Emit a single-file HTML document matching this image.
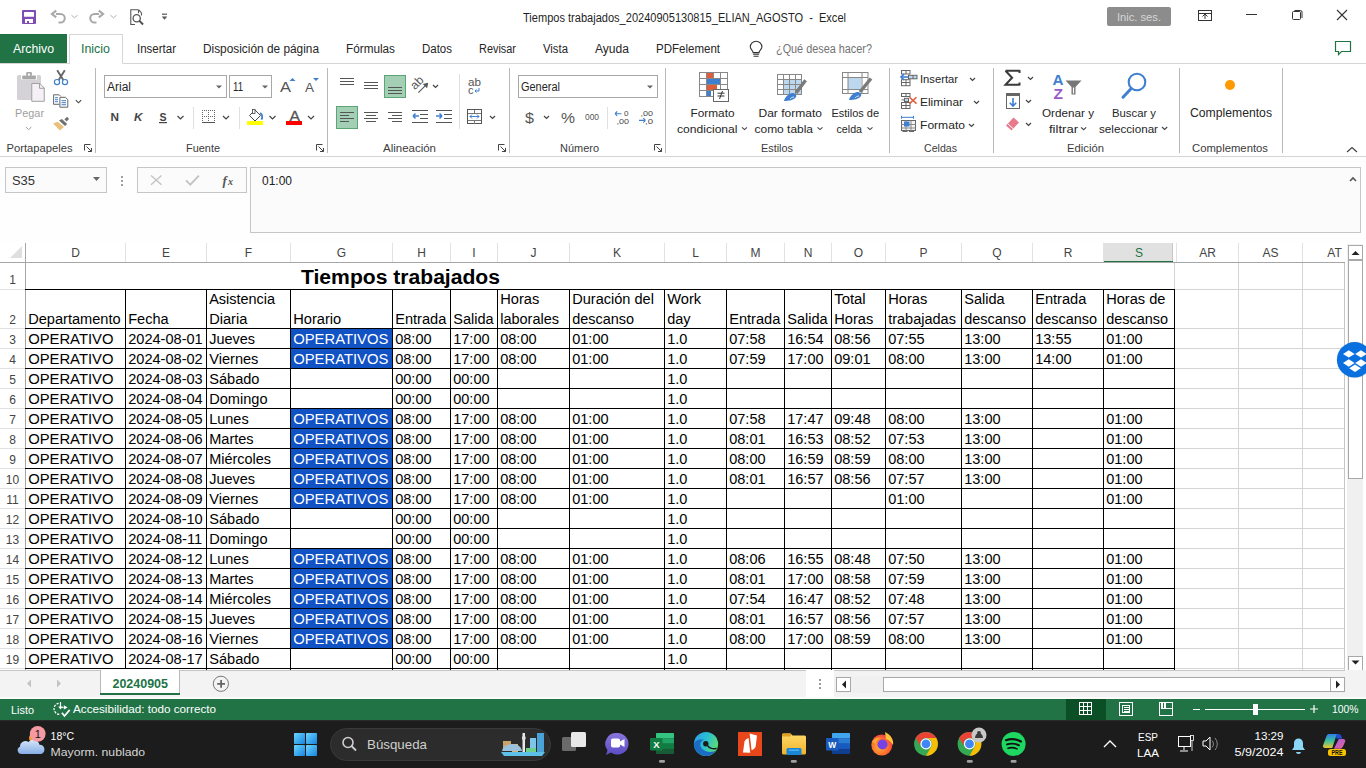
<!DOCTYPE html>
<html><head><meta charset="utf-8"><title>Excel</title>
<style>
html,body{margin:0;padding:0;width:1366px;height:768px;overflow:hidden;background:#fff;}
svg{display:block;font-family:"Liberation Sans",sans-serif;}
</style></head>
<body>
<svg width="1366" height="768" viewBox="0 0 1366 768" shape-rendering="auto">
<rect x="0" y="0" width="1366" height="720" fill="#ffffff"/>
<rect x="22" y="10" width="14" height="14" fill="#7f4bb5" rx="1"/>
<rect x="24" y="12" width="10" height="4.8" fill="#fff" rx="0.6"/>
<rect x="25" y="19" width="8" height="4" fill="#fff"/>
<rect x="27" y="21" width="2" height="2" fill="#7f4bb5"/>
<path d="M56.2 10.6L52 14L56.2 17.4" fill="none" stroke="#a9a9a9" stroke-width="2.2"/>
<path d="M56 14H60.5A4.3 4.3 0 0 1 60.5 22.6H58.5" fill="none" stroke="#a9a9a9" stroke-width="2"/>
<path d="M71.5 15.2l3 2.6 3-2.6" fill="none" stroke="#b0b0b0" stroke-width="1"/>
<path d="M98.8 10.6L103 14L98.8 17.4" fill="none" stroke="#a9a9a9" stroke-width="2.2"/>
<path d="M99 14H94.5A4.3 4.3 0 0 0 94.5 22.6H96.5" fill="none" stroke="#a9a9a9" stroke-width="2"/>
<path d="M110.5 15.2l3 2.6 3-2.6" fill="none" stroke="#b0b0b0" stroke-width="1"/>
<path d="M138.5 9.8H130.8V24.5H135 M141.5 13V15.5 M138.5 9.8v3.5 M138.8 9.8l2.7 3" fill="none" stroke="#555" stroke-width="1.1"/>
<circle cx="136.7" cy="18.2" r="3.6" fill="none" stroke="#555" stroke-width="1.3"/>
<path d="M139.3 20.8l3.8 3.6" fill="none" stroke="#555" stroke-width="2"/>
<rect x="162" y="13.6" width="5" height="1.2" fill="#555"/>
<path d="M161.8 16.6h5.4l-2.7 3.2z" fill="#555"/>
<text x="523" y="22" font-size="12" fill="#1f1f1f" textLength="323" lengthAdjust="spacingAndGlyphs" xml:space="preserve">Tiempos trabajados_20240905130815_ELIAN_AGOSTO  -  Excel</text>
<rect x="1107" y="7" width="64" height="19" fill="#8c8c8c" rx="2"/>
<text x="1117" y="21" font-size="11.5" fill="#d6d6d6" textLength="44" lengthAdjust="spacingAndGlyphs">Inic. ses.</text>
<rect x="1198.5" y="10.5" width="13" height="10" fill="none" stroke="#333" stroke-width="1"/>
<rect x="1199" y="13" width="12" height="1" fill="#333"/>
<path d="M1205 19v-5 M1202.5 16.5l2.5-2.5 2.5 2.5" fill="none" stroke="#333" stroke-width="1"/>
<rect x="1246" y="14" width="11" height="1" fill="#333"/>
<rect x="1292.5" y="11.5" width="8" height="8" fill="none" stroke="#333" stroke-width="1" rx="1"/>
<path d="M1294.5 10.5h6a1.5 1.5 0 0 1 1.5 1.5v6" fill="none" stroke="#333" stroke-width="1"/>
<path d="M1337 10l10 10M1347 10l-10 10" fill="none" stroke="#333" stroke-width="1.1"/>
<rect x="0" y="34" width="67" height="29" fill="#217346"/>
<text x="13" y="52.5" font-size="12" fill="#ffffff" textLength="41" lengthAdjust="spacingAndGlyphs">Archivo</text>
<rect x="0" y="63" width="1366" height="1" fill="#d5d5d5"/>
<rect x="70" y="34" width="53" height="30" fill="#ffffff"/>
<path d="M69.5 63.5V34.5H122.5V63.5" fill="none" stroke="#d5d5d5" stroke-width="1"/>
<rect x="70" y="63" width="52" height="1" fill="#ffffff"/>
<text x="81" y="52.5" font-size="12" fill="#217346" textLength="29" lengthAdjust="spacingAndGlyphs">Inicio</text>
<text x="137" y="52.5" font-size="12" fill="#262626" textLength="39" lengthAdjust="spacingAndGlyphs">Insertar</text>
<text x="203" y="52.5" font-size="12" fill="#262626" textLength="116" lengthAdjust="spacingAndGlyphs">Disposición de página</text>
<text x="346" y="52.5" font-size="12" fill="#262626" textLength="49" lengthAdjust="spacingAndGlyphs">Fórmulas</text>
<text x="422" y="52.5" font-size="12" fill="#262626" textLength="30" lengthAdjust="spacingAndGlyphs">Datos</text>
<text x="479" y="52.5" font-size="12" fill="#262626" textLength="37" lengthAdjust="spacingAndGlyphs">Revisar</text>
<text x="543" y="52.5" font-size="12" fill="#262626" textLength="25" lengthAdjust="spacingAndGlyphs">Vista</text>
<text x="595" y="52.5" font-size="12" fill="#262626" textLength="34" lengthAdjust="spacingAndGlyphs">Ayuda</text>
<text x="656" y="52.5" font-size="12" fill="#262626" textLength="64" lengthAdjust="spacingAndGlyphs">PDFelement</text>
<path d="M753.6 56.3h5 M753.1 54.3h6 M753.1 52.6c0-2.3-2.8-3.3-2.8-5.6a5.8 5.8 0 0 1 11.6 0c0 2.3-2.8 3.3-2.8 5.6z" fill="none" stroke="#333" stroke-width="1.1"/>
<text x="776" y="53" font-size="12" fill="#737373" textLength="96" lengthAdjust="spacingAndGlyphs">¿Qué desea hacer?</text>
<path d="M1335.5 41.5h15v10h-9l-3 3v-3h-3z" fill="none" stroke="#217346" stroke-width="1.2"/>
<rect x="0" y="156" width="1366" height="1" fill="#d5d5d5"/>
<rect x="95" y="68" width="1" height="85" fill="#b8b8b8"/>
<rect x="327" y="68" width="1" height="85" fill="#b8b8b8"/>
<rect x="509" y="68" width="1" height="85" fill="#b8b8b8"/>
<rect x="665" y="68" width="1" height="85" fill="#b8b8b8"/>
<rect x="889" y="68" width="1" height="85" fill="#b8b8b8"/>
<rect x="993" y="68" width="1" height="85" fill="#b8b8b8"/>
<rect x="1179" y="68" width="1" height="85" fill="#b8b8b8"/>
<rect x="1282" y="68" width="1" height="85" fill="#b8b8b8"/>
<text x="6.5" y="151.7" font-size="10.6" fill="#3c3c3c" textLength="66" lengthAdjust="spacingAndGlyphs">Portapapeles</text>
<text x="186" y="151.7" font-size="10.6" fill="#3c3c3c" textLength="34" lengthAdjust="spacingAndGlyphs">Fuente</text>
<text x="383" y="151.7" font-size="10.6" fill="#3c3c3c" textLength="53" lengthAdjust="spacingAndGlyphs">Alineación</text>
<text x="560" y="151.7" font-size="10.6" fill="#3c3c3c" textLength="39" lengthAdjust="spacingAndGlyphs">Número</text>
<text x="761" y="151.7" font-size="10.6" fill="#3c3c3c" textLength="32" lengthAdjust="spacingAndGlyphs">Estilos</text>
<text x="924" y="151.7" font-size="10.6" fill="#3c3c3c" textLength="33" lengthAdjust="spacingAndGlyphs">Celdas</text>
<text x="1067" y="151.7" font-size="10.6" fill="#3c3c3c" textLength="37" lengthAdjust="spacingAndGlyphs">Edición</text>
<text x="1192" y="151.7" font-size="10.6" fill="#3c3c3c" textLength="76" lengthAdjust="spacingAndGlyphs">Complementos</text>
<path d="M84.5 150.5v-6h6 M86.5 146.5l5 5 M91.5 148v3.5h-3.5" fill="none" stroke="#444" stroke-width="1"/>
<path d="M316.5 150.5v-6h6 M318.5 146.5l5 5 M323.5 148v3.5h-3.5" fill="none" stroke="#444" stroke-width="1"/>
<path d="M498.5 150.5v-6h6 M500.5 146.5l5 5 M505.5 148v3.5h-3.5" fill="none" stroke="#444" stroke-width="1"/>
<path d="M654.5 150.5v-6h6 M656.5 146.5l5 5 M661.5 148v3.5h-3.5" fill="none" stroke="#444" stroke-width="1"/>
<path d="M1347 152l5-4.5 5 4.5" fill="none" stroke="#444" stroke-width="1.2"/>
<rect x="17" y="75" width="24" height="25" fill="#d4d2d6" rx="1.5"/>
<rect x="21" y="75" width="16" height="4.5" fill="#ffffff"/>
<rect x="22.2" y="75.6" width="13.7" height="3.6" fill="#a8a8a8" rx="0.8"/>
<rect x="26.2" y="72.1" width="5.7" height="4" fill="#a8a8a8" rx="1"/>
<rect x="28" y="73.6" width="2" height="2" fill="#ffffff"/>
<path d="M31.75 83.5h8l4.5 4.5v13.3h-12.5z" fill="#f4f0f6" stroke="#a0a0a0" stroke-width="1"/>
<path d="M39.5 83.5v4.8h4.8" fill="none" stroke="#a0a0a0" stroke-width="1"/>
<text x="15" y="116.8" font-size="11.5" fill="#a0a0a0" textLength="29" lengthAdjust="spacingAndGlyphs">Pegar</text>
<path d="M25.8 127l2.8 2.6 2.8-2.6" fill="none" stroke="#a0a0a0" stroke-width="1"/>
<path d="M57.2 70.3l6.6 10.5 M64.8 70.3l-6.6 10.5" fill="none" stroke="#666" stroke-width="1.9"/>
<circle cx="57" cy="82.1" r="2.6" fill="#fff" stroke="#3f7fcf" stroke-width="1.2"/>
<circle cx="65" cy="82.1" r="2.6" fill="#fff" stroke="#3f7fcf" stroke-width="1.2"/>
<path d="M53.6 94.8h5.6l1.5 1.5 M53.6 94.8v9.5h6" fill="none" stroke="#666" stroke-width="1"/>
<path d="M59.9 97.3h5.5l2.4 2.4v7.5h-7.9z" fill="#fff" stroke="#666" stroke-width="1"/>
<rect x="55" y="97.2" width="3" height="1" fill="#3f7fcf"/>
<rect x="55" y="99.2" width="3" height="1" fill="#3f7fcf"/>
<rect x="55" y="101.2" width="3" height="1" fill="#3f7fcf"/>
<rect x="61.5" y="100.2" width="4.5" height="1" fill="#3f7fcf"/>
<rect x="61.5" y="102.2" width="4.5" height="1" fill="#3f7fcf"/>
<rect x="61.5" y="104.2" width="4.5" height="1" fill="#3f7fcf"/>
<path d="M75.8 100.2l2.7 2.6 2.7-2.6" fill="none" stroke="#444" stroke-width="1.1"/>
<path d="M53.1 123.4L57.5 121.8L64 126.8L60 130.6z" fill="#e8c07a"/>
<path d="M59 120.6L61.9 119L67.2 124L65 125.9z" fill="#707070"/>
<path d="M64.4 119.3L67.2 116.8L69 119L66.6 121.5z" fill="#707070"/>
<rect x="104.5" y="75.5" width="122" height="22" fill="#fff" stroke="#a8a8a8" stroke-width="1"/>
<text x="107" y="91" font-size="12" fill="#262626" textLength="24" lengthAdjust="spacingAndGlyphs">Arial</text>
<path d="M216 85.5h6l-3 3z" fill="#666"/>
<rect x="229.5" y="75.5" width="42" height="22" fill="#fff" stroke="#a8a8a8" stroke-width="1"/>
<text x="233" y="91" font-size="12" fill="#262626" textLength="10" lengthAdjust="spacingAndGlyphs">11</text>
<path d="M262 85.5h6l-3 3z" fill="#666"/>
<text x="280" y="92" font-size="15" fill="#555" textLength="11" lengthAdjust="spacingAndGlyphs">A</text>
<path d="M289.5 81l3-3 3 3z" fill="#3f7fcf"/>
<text x="305" y="92" font-size="12" fill="#555" textLength="9" lengthAdjust="spacingAndGlyphs">A</text>
<path d="M313 78h6l-3 3z" fill="#3f7fcf"/>
<text x="110.5" y="120.7" font-size="11.5" fill="#444" font-weight="bold" textLength="8.5" lengthAdjust="spacingAndGlyphs">N</text>
<text x="134" y="120.7" font-size="11.5" fill="#444" font-weight="bold" textLength="8.5" lengthAdjust="spacingAndGlyphs" font-style="italic">K</text>
<text x="159.5" y="120.7" font-size="11.5" fill="#444" font-weight="bold" textLength="7" lengthAdjust="spacingAndGlyphs">S</text>
<rect x="159" y="122" width="8" height="1.2" fill="#444"/>
<path d="M177.5 116l3 3 3-3" fill="none" stroke="#444" stroke-width="1.2"/>
<rect x="193" y="107" width="1" height="22" fill="#e0e0e0"/>
<rect x="202" y="110" width="1" height="1" fill="#666"/>
<rect x="204" y="110" width="1" height="1" fill="#666"/>
<rect x="206" y="110" width="1" height="1" fill="#666"/>
<rect x="208" y="110" width="1" height="1" fill="#666"/>
<rect x="210" y="110" width="1" height="1" fill="#666"/>
<rect x="212" y="110" width="1" height="1" fill="#666"/>
<rect x="214" y="110" width="1" height="1" fill="#666"/>
<rect x="202" y="116" width="1" height="1" fill="#666"/>
<rect x="204" y="116" width="1" height="1" fill="#666"/>
<rect x="206" y="116" width="1" height="1" fill="#666"/>
<rect x="208" y="116" width="1" height="1" fill="#666"/>
<rect x="210" y="116" width="1" height="1" fill="#666"/>
<rect x="212" y="116" width="1" height="1" fill="#666"/>
<rect x="214" y="116" width="1" height="1" fill="#666"/>
<rect x="202" y="112" width="1" height="1" fill="#666"/>
<rect x="202" y="114" width="1" height="1" fill="#666"/>
<rect x="202" y="116" width="1" height="1" fill="#666"/>
<rect x="202" y="118" width="1" height="1" fill="#666"/>
<rect x="202" y="120" width="1" height="1" fill="#666"/>
<rect x="208" y="112" width="1" height="1" fill="#666"/>
<rect x="208" y="114" width="1" height="1" fill="#666"/>
<rect x="208" y="116" width="1" height="1" fill="#666"/>
<rect x="208" y="118" width="1" height="1" fill="#666"/>
<rect x="208" y="120" width="1" height="1" fill="#666"/>
<rect x="214" y="112" width="1" height="1" fill="#666"/>
<rect x="214" y="114" width="1" height="1" fill="#666"/>
<rect x="214" y="116" width="1" height="1" fill="#666"/>
<rect x="214" y="118" width="1" height="1" fill="#666"/>
<rect x="214" y="120" width="1" height="1" fill="#666"/>
<rect x="202" y="122" width="13" height="1" fill="#555"/>
<path d="M223 116l3 3 3-3" fill="none" stroke="#444" stroke-width="1.2"/>
<rect x="239" y="107" width="1" height="22" fill="#e0e0e0"/>
<path d="M249.5 115.5L255 110L260.5 115.5L255 121z" fill="#fff" stroke="#444" stroke-width="1"/>
<rect x="252.5" y="109.5" width="2.5" height="4" fill="#fff" stroke="#444" stroke-width="0.8"/>
<path d="M260 113.2c2 0.8 3 3 1.5 6.5" fill="none" stroke="#3f7fcf" stroke-width="1.8"/>
<rect x="247" y="121" width="16" height="4" fill="#ffff00"/>
<path d="M269.5 116l3 3 3-3" fill="none" stroke="#444" stroke-width="1.2"/>
<text x="289.5" y="120.6" font-size="14" fill="#555" textLength="10.5" lengthAdjust="spacingAndGlyphs" stroke="#555" stroke-width="0.3">A</text>
<rect x="286" y="121" width="16" height="4" fill="#ff0000"/>
<path d="M308 116l3 3 3-3" fill="none" stroke="#444" stroke-width="1.2"/>
<rect x="340" y="78" width="14" height="1" fill="#555"/>
<rect x="340" y="81" width="14" height="1" fill="#555"/>
<rect x="340" y="84" width="14" height="1" fill="#555"/>
<rect x="364" y="82" width="14" height="1" fill="#555"/>
<rect x="364" y="85" width="14" height="1" fill="#555"/>
<rect x="364" y="88" width="14" height="1" fill="#555"/>
<rect x="384.5" y="75.5" width="21" height="22" fill="#a3d0b5" stroke="#5ba577" stroke-width="1"/>
<rect x="388" y="87" width="14" height="1" fill="#555"/>
<rect x="388" y="90" width="14" height="1" fill="#555"/>
<rect x="388" y="93" width="14" height="1" fill="#555"/>
<text x="415" y="90.2" font-size="12" fill="#555" transform="rotate(-45 415 90.2)">ab</text>
<path d="M418.4 92.6L427.6 83.4" fill="none" stroke="#555" stroke-width="1.1"/>
<path d="M428.2 82.8L422.8 83.9L427.1 88.2z" fill="#555"/>
<path d="M433 85l2.5 2.5 2.5-2.5" fill="none" stroke="#444" stroke-width="1.2"/>
<rect x="459" y="74" width="1" height="55" fill="#e0e0e0"/>
<text x="468" y="86" font-size="11" fill="#555" textLength="13" lengthAdjust="spacingAndGlyphs">ab</text>
<text x="468" y="94" font-size="11" fill="#555">c</text>
<path d="M479 88v3h-4 M476.5 89.5l-1.5 1.5 1.5 1.5" fill="none" stroke="#3f7fcf" stroke-width="1"/>
<rect x="336.5" y="106.5" width="21" height="22" fill="#a3d0b5" stroke="#5ba577" stroke-width="1"/>
<rect x="340" y="112" width="14" height="1" fill="#555"/>
<rect x="340" y="115" width="9" height="1" fill="#555"/>
<rect x="340" y="118" width="14" height="1" fill="#555"/>
<rect x="340" y="121" width="9" height="1" fill="#555"/>
<rect x="364" y="112" width="14" height="1" fill="#555"/>
<rect x="366" y="115" width="10" height="1" fill="#555"/>
<rect x="364" y="118" width="14" height="1" fill="#555"/>
<rect x="366" y="121" width="10" height="1" fill="#555"/>
<rect x="388" y="112" width="14" height="1" fill="#555"/>
<rect x="392" y="115" width="10" height="1" fill="#555"/>
<rect x="388" y="118" width="14" height="1" fill="#555"/>
<rect x="392" y="121" width="10" height="1" fill="#555"/>
<rect x="412" y="110" width="16" height="1" fill="#555"/>
<rect x="420" y="114" width="8" height="1" fill="#555"/>
<rect x="420" y="118" width="8" height="1" fill="#555"/>
<rect x="412" y="122" width="16" height="1" fill="#555"/>
<path d="M413 116h6 M413 116l2.5-2.5 M413 116l2.5 2.5" fill="none" stroke="#3f7fcf" stroke-width="1.5"/>
<rect x="436" y="110" width="16" height="1" fill="#555"/>
<rect x="444" y="114" width="8" height="1" fill="#555"/>
<rect x="444" y="118" width="8" height="1" fill="#555"/>
<rect x="436" y="122" width="16" height="1" fill="#555"/>
<path d="M436 116h6 M442 116l-2.5-2.5 M442 116l-2.5 2.5" fill="none" stroke="#3f7fcf" stroke-width="1.5"/>
<rect x="467.5" y="109.5" width="14" height="14" fill="none" stroke="#555" stroke-width="1"/>
<rect x="468" y="113" width="13" height="1" fill="#777"/>
<rect x="468" y="120" width="13" height="1" fill="#777"/>
<rect x="474" y="110" width="1" height="3" fill="#777"/>
<rect x="474" y="120" width="1" height="4" fill="#777"/>
<path d="M470 116.5h9 M470 116.5l2-2 M470 116.5l2 2 M479 116.5l-2-2 M479 116.5l-2 2" fill="none" stroke="#3f7fcf" stroke-width="1"/>
<path d="M490 116l2.5 2.5 2.5-2.5" fill="none" stroke="#444" stroke-width="1.2"/>
<rect x="518.5" y="75.5" width="139" height="22" fill="#fff" stroke="#a8a8a8" stroke-width="1"/>
<text x="521" y="91" font-size="12" fill="#262626" textLength="39" lengthAdjust="spacingAndGlyphs">General</text>
<path d="M647 85.5h6l-3 3z" fill="#666"/>
<text x="525" y="123" font-size="15" fill="#555" textLength="9" lengthAdjust="spacingAndGlyphs">$</text>
<path d="M544 116l2.5 2.5 2.5-2.5" fill="none" stroke="#444" stroke-width="1.2"/>
<text x="561" y="123" font-size="14" fill="#555" textLength="14" lengthAdjust="spacingAndGlyphs">%</text>
<text x="585" y="120" font-size="9" fill="#555" textLength="14" lengthAdjust="spacingAndGlyphs">000</text>
<rect x="607" y="107" width="1" height="22" fill="#e0e0e0"/>
<text x="624" y="115.5" font-size="7.5" fill="#444" textLength="4.5" lengthAdjust="spacingAndGlyphs">0</text>
<text x="616.5" y="123.8" font-size="7.5" fill="#444" textLength="12.5" lengthAdjust="spacingAndGlyphs">,00</text>
<path d="M615 113.7h6.5 M615 113.7l2.2-2.2 M615 113.7l2.2 2.2" fill="none" stroke="#3f7fcf" stroke-width="1.1"/>
<text x="640.5" y="115.5" font-size="7.5" fill="#444" textLength="12.5" lengthAdjust="spacingAndGlyphs">,00</text>
<text x="645" y="123.8" font-size="7.5" fill="#444" textLength="8" lengthAdjust="spacingAndGlyphs">,0</text>
<path d="M639 120.4h6.5 M645.5 120.4l-2.2-2.2 M645.5 120.4l-2.2 2.2" fill="none" stroke="#3f7fcf" stroke-width="1.1"/>
<rect x="699" y="72" width="1" height="25" fill="#888"/>
<rect x="706" y="72" width="1" height="25" fill="#888"/>
<rect x="713" y="72" width="1" height="25" fill="#888"/>
<rect x="720" y="72" width="1" height="25" fill="#888"/>
<rect x="727" y="72" width="1" height="25" fill="#888"/>
<rect x="699" y="72" width="29" height="1" fill="#888"/>
<rect x="699" y="78" width="29" height="1" fill="#888"/>
<rect x="699" y="84" width="29" height="1" fill="#888"/>
<rect x="699" y="90" width="29" height="1" fill="#888"/>
<rect x="699" y="96" width="29" height="1" fill="#888"/>
<rect x="707" y="73" width="6" height="5" fill="#e05c3a"/>
<rect x="707" y="79" width="13" height="5" fill="#3f7fcf"/>
<rect x="707" y="85" width="10" height="5" fill="#e05c3a"/>
<rect x="707" y="91" width="4" height="5" fill="#3f7fcf"/>
<rect x="713.5" y="89.5" width="15" height="12" fill="#fff" stroke="#666" stroke-width="1"/>
<path d="M717.5 96h7 M717.5 93.2h7 M719.5 99l3-8" fill="none" stroke="#333" stroke-width="1"/>
<text x="690.5" y="117" font-size="11.5" fill="#262626" textLength="44" lengthAdjust="spacingAndGlyphs">Formato</text>
<text x="677" y="133" font-size="11.5" fill="#262626" textLength="60.5" lengthAdjust="spacingAndGlyphs">condicional</text>
<path d="M742 127.3l2.5 2.3 2.5-2.3" fill="none" stroke="#444" stroke-width="1.1"/>
<rect x="783" y="80" width="19" height="15" fill="#bdd7ee"/>
<rect x="777" y="74" width="1" height="21" fill="#888"/>
<rect x="783" y="74" width="1" height="21" fill="#888"/>
<rect x="789" y="74" width="1" height="21" fill="#888"/>
<rect x="795" y="74" width="1" height="21" fill="#888"/>
<rect x="801" y="74" width="1" height="21" fill="#888"/>
<rect x="777" y="74" width="25" height="1" fill="#888"/>
<rect x="777" y="79" width="25" height="1" fill="#888"/>
<rect x="777" y="84" width="25" height="1" fill="#888"/>
<rect x="777" y="89" width="25" height="1" fill="#888"/>
<rect x="777" y="94" width="25" height="1" fill="#888"/>
<path d="M805.6 80.3L796 93" fill="none" stroke="#7a7a7a" stroke-width="3.4"/>
<path d="M784 101c1-4 4-7 8-8 3 0 5 2 4 4-2 3-7 4-12 4z" fill="#3f7fcf"/>
<path d="M790 99c1-1 2-2 4-2" fill="none" stroke="#fff" stroke-width="0.8"/>
<text x="758.5" y="117" font-size="11.5" fill="#262626" textLength="63.5" lengthAdjust="spacingAndGlyphs">Dar formato</text>
<text x="754.5" y="133" font-size="11.5" fill="#262626" textLength="58.5" lengthAdjust="spacingAndGlyphs">como tabla</text>
<path d="M817.5 127.3l2.5 2.3 2.5-2.3" fill="none" stroke="#444" stroke-width="1.1"/>
<rect x="848" y="78" width="13" height="11" fill="#bdd7ee"/>
<rect x="842.5" y="72.5" width="25.5" height="21" fill="none" stroke="#888" stroke-width="1"/>
<rect x="847.5" y="72.5" width="1" height="21.5" fill="#888"/>
<rect x="861.5" y="72.5" width="1" height="21.5" fill="#888"/>
<rect x="842.5" y="77" width="25.5" height="1" fill="#888"/>
<rect x="842.5" y="89" width="25.5" height="1" fill="#888"/>
<path d="M871 78.5L860 92" fill="none" stroke="#7a7a7a" stroke-width="3.4"/>
<path d="M849 100c1-4 4-7 8-8 3 0 5 2 4 4-2 3-7 4-12 4z" fill="#3f7fcf"/>
<path d="M855 98c1-1 2-2 4-2" fill="none" stroke="#fff" stroke-width="0.8"/>
<text x="831.5" y="117" font-size="11.5" fill="#262626" textLength="47.5" lengthAdjust="spacingAndGlyphs">Estilos de</text>
<text x="836.5" y="133" font-size="11.5" fill="#262626" textLength="25.5" lengthAdjust="spacingAndGlyphs">celda</text>
<path d="M867.5 127.3l2.5 2.3 2.5-2.3" fill="none" stroke="#444" stroke-width="1.1"/>
<rect x="901.5" y="70.5" width="8.5" height="3.5" fill="none" stroke="#666" stroke-width="1"/>
<rect x="905.5" y="70.5" width="1" height="3.5" fill="#666"/>
<rect x="908.5" y="75.3" width="8.5" height="3.5" fill="#bdd7ee" stroke="#666" stroke-width="1"/>
<rect x="912.5" y="75.3" width="1" height="3.700000000000003" fill="#666"/>
<rect x="901.5" y="79.7" width="8.5" height="6" fill="none" stroke="#666" stroke-width="1"/>
<rect x="905.5" y="79.7" width="1" height="6.299999999999997" fill="#666"/>
<rect x="901" y="82" width="9" height="1" fill="#666"/>
<path d="M901 77h7" fill="none" stroke="#3f7fcf" stroke-width="1.6"/>
<path d="M904 74.2L901 77L904 79.8" fill="none" stroke="#3f7fcf" stroke-width="1.6"/>
<text x="920" y="83" font-size="11.5" fill="#262626" textLength="38" lengthAdjust="spacingAndGlyphs">Insertar</text>
<path d="M970 78l2.5 2.5 2.5-2.5" fill="none" stroke="#444" stroke-width="1.2"/>
<rect x="901.5" y="93.5" width="8.5" height="3" fill="none" stroke="#666" stroke-width="1"/>
<rect x="905.5" y="93.5" width="1" height="3.5" fill="#666"/>
<rect x="904.5" y="98.3" width="4" height="3.2" fill="#bdd7ee" stroke="#666" stroke-width="1"/>
<path d="M901.5 99.9h3" fill="none" stroke="#666" stroke-width="1"/>
<rect x="901.5" y="102.5" width="8.5" height="6" fill="none" stroke="#666" stroke-width="1"/>
<rect x="905.5" y="102.5" width="1" height="6.5" fill="#666"/>
<rect x="901" y="105" width="9" height="1" fill="#666"/>
<path d="M909.5 97.2l7 6.4 M916.5 97.2l-7 6.4" fill="none" stroke="#e05c3a" stroke-width="1.5"/>
<text x="920" y="106" font-size="11.5" fill="#262626" textLength="43" lengthAdjust="spacingAndGlyphs">Eliminar</text>
<path d="M974 101l2.5 2.5 2.5-2.5" fill="none" stroke="#444" stroke-width="1.2"/>
<path d="M901.5 115.8v3 M913.5 115.8v3 M902 117.3h11" fill="none" stroke="#3f7fcf" stroke-width="1"/>
<rect x="901.5" y="120.5" width="14" height="10" fill="#f4f4f4" stroke="#666" stroke-width="1"/>
<rect x="905.5" y="120.5" width="1" height="10.5" fill="#888"/>
<rect x="910.5" y="120.5" width="1" height="10.5" fill="#888"/>
<rect x="901.5" y="124" width="14.0" height="1" fill="#888"/>
<rect x="901.5" y="127.5" width="14.0" height="1" fill="#888"/>
<rect x="904" y="121.5" width="5.5" height="5" fill="#3f7fcf"/>
<path d="M902.5 131.5h5 M909 131.5h5" fill="none" stroke="#666" stroke-width="1"/>
<text x="920" y="129" font-size="11.5" fill="#262626" textLength="45" lengthAdjust="spacingAndGlyphs">Formato</text>
<path d="M969 124l2.5 2.5 2.5-2.5" fill="none" stroke="#444" stroke-width="1.2"/>
<path d="M1005.5 70.8h14 M1019.5 70v3 M1005.5 70.8l6.6 7-6.6 7h14 M1019.5 82.5v3" fill="none" stroke="#3a3a3a" stroke-width="2"/>
<path d="M1028 77l2.5 2.5 2.5-2.5" fill="none" stroke="#444" stroke-width="1.2"/>
<rect x="1006.5" y="93.5" width="13" height="15" fill="#fff" stroke="#666" stroke-width="1"/>
<rect x="1006" y="93" width="14" height="3" fill="#666"/>
<path d="M1013 98v8 M1009.8 102.8l3.2 3.2 3.2-3.2" fill="none" stroke="#3f7fcf" stroke-width="1.6"/>
<path d="M1026 100l2.5 2.5 2.5-2.5" fill="none" stroke="#444" stroke-width="1.2"/>
<path d="M1006 125.5l7.5-8 5.5 5-7.5 8z" fill="#e8788c"/>
<path d="M1007.8 123.8l5.5 5" fill="none" stroke="#fff" stroke-width="1"/>
<path d="M1026 123l2.5 2.5 2.5-2.5" fill="none" stroke="#444" stroke-width="1.2"/>
<text x="1052.5" y="84.5" font-size="14.5" fill="#3f7fcf" font-weight="bold" textLength="11" lengthAdjust="spacingAndGlyphs">A</text>
<text x="1053.5" y="98.7" font-size="14.5" fill="#9b59c8" font-weight="bold" textLength="9.5" lengthAdjust="spacingAndGlyphs">Z</text>
<path d="M1065.5 80.5h16l-6 6.5v7.5h-4v-7.5z" fill="#777"/>
<path d="M1073.5 87.5v6" fill="none" stroke="#fff" stroke-width="1.2"/>
<text x="1042" y="117" font-size="11.5" fill="#262626" textLength="52" lengthAdjust="spacingAndGlyphs">Ordenar y</text>
<text x="1049" y="133" font-size="11.5" fill="#262626" textLength="29" lengthAdjust="spacingAndGlyphs">filtrar</text>
<path d="M1081 127.3l2.6 2.4 2.6-2.4" fill="none" stroke="#444" stroke-width="1.1"/>
<circle cx="1137" cy="82" r="8.3" fill="none" stroke="#3f7fcf" stroke-width="2.1"/>
<path d="M1131.2 88.5l-8.2 8.7" fill="none" stroke="#3f7fcf" stroke-width="3" stroke-linecap="round"/>
<text x="1112" y="117" font-size="11.5" fill="#262626" textLength="44" lengthAdjust="spacingAndGlyphs">Buscar y</text>
<text x="1099" y="133" font-size="11.5" fill="#262626" textLength="59" lengthAdjust="spacingAndGlyphs">seleccionar</text>
<path d="M1162 127l2.6 2.5 2.6-2.5" fill="none" stroke="#444" stroke-width="1.1"/>
<circle cx="1230" cy="85" r="5" fill="#ff9900"/>
<text x="1190" y="117" font-size="12" fill="#262626" textLength="82" lengthAdjust="spacingAndGlyphs">Complementos</text>
<rect x="0" y="157" width="1366" height="86" fill="#fefefe"/>
<rect x="5.5" y="167.5" width="101" height="25" fill="#fbfbfb" stroke="#c6c6c6" stroke-width="1"/>
<text x="12" y="185" font-size="12" fill="#333" textLength="23" lengthAdjust="spacingAndGlyphs">S35</text>
<path d="M93 177h7l-3.5 4z" fill="#666"/>
<rect x="121" y="176" width="2" height="2" fill="#a0a0a0"/>
<rect x="121" y="180" width="2" height="2" fill="#a0a0a0"/>
<rect x="121" y="184" width="2" height="2" fill="#a0a0a0"/>
<rect x="137.5" y="167.5" width="109" height="25" fill="#fbfbfb" stroke="#c6c6c6" stroke-width="1"/>
<path d="M151 175.5l10.5 9.3 M161.5 175.5l-10.5 9.3" fill="none" stroke="#c4c4c4" stroke-width="1.4"/>
<path d="M186 180.3l4.3 4.3 8.6-9" fill="none" stroke="#c4c4c4" stroke-width="1.9"/>
<text x="222.5" y="184.7" font-size="13" fill="#555" font-weight="bold" font-family="Liberation Serif" font-style="italic">f</text>
<text x="228" y="184.5" font-size="10" fill="#555" font-weight="bold" font-family="Liberation Serif" font-style="italic">x</text>
<rect x="250.5" y="167.5" width="1110" height="65" fill="#fbfbfb" stroke="#c6c6c6" stroke-width="1"/>
<text x="262" y="185" font-size="12" fill="#222" textLength="30" lengthAdjust="spacingAndGlyphs">01:00</text>
<path d="M1350 181l3-3 3 3" fill="none" stroke="#555" stroke-width="1.6"/>
<rect x="0" y="243" width="1345" height="20" fill="#ffffff"/>
<path d="M10 258h12v-12z" fill="#dfdfdf"/>
<rect x="25" y="243" width="1" height="427" fill="#a6a6a6"/>
<rect x="1104" y="243" width="69" height="18" fill="#e1e1e1"/>
<rect x="1104" y="261" width="69" height="2" fill="#217346"/>
<rect x="1172" y="243" width="1" height="18" fill="#c8c8c8"/>
<rect x="125" y="243" width="1" height="19" fill="#e1e1e1"/>
<rect x="206" y="243" width="1" height="19" fill="#e1e1e1"/>
<rect x="290" y="243" width="1" height="19" fill="#e1e1e1"/>
<rect x="392" y="243" width="1" height="19" fill="#e1e1e1"/>
<rect x="450" y="243" width="1" height="19" fill="#e1e1e1"/>
<rect x="497" y="243" width="1" height="19" fill="#e1e1e1"/>
<rect x="569" y="243" width="1" height="19" fill="#e1e1e1"/>
<rect x="664" y="243" width="1" height="19" fill="#e1e1e1"/>
<rect x="726" y="243" width="1" height="19" fill="#e1e1e1"/>
<rect x="784" y="243" width="1" height="19" fill="#e1e1e1"/>
<rect x="831" y="243" width="1" height="19" fill="#e1e1e1"/>
<rect x="885" y="243" width="1" height="19" fill="#e1e1e1"/>
<rect x="961" y="243" width="1" height="19" fill="#e1e1e1"/>
<rect x="1032" y="243" width="1" height="19" fill="#e1e1e1"/>
<rect x="1103" y="243" width="1" height="19" fill="#e1e1e1"/>
<rect x="1176" y="243" width="1" height="19" fill="#e1e1e1"/>
<rect x="1238" y="243" width="1" height="19" fill="#e1e1e1"/>
<rect x="1302" y="243" width="1" height="19" fill="#e1e1e1"/>
<rect x="0" y="262" width="1345" height="1" fill="#a6a6a6"/>
<text x="75.5" y="257" font-size="12" fill="#444444" text-anchor="middle">D</text>
<text x="166.0" y="257" font-size="12" fill="#444444" text-anchor="middle">E</text>
<text x="248.5" y="257" font-size="12" fill="#444444" text-anchor="middle">F</text>
<text x="341.5" y="257" font-size="12" fill="#444444" text-anchor="middle">G</text>
<text x="421.5" y="257" font-size="12" fill="#444444" text-anchor="middle">H</text>
<text x="474.0" y="257" font-size="12" fill="#444444" text-anchor="middle">I</text>
<text x="533.5" y="257" font-size="12" fill="#444444" text-anchor="middle">J</text>
<text x="617.0" y="257" font-size="12" fill="#444444" text-anchor="middle">K</text>
<text x="695.5" y="257" font-size="12" fill="#444444" text-anchor="middle">L</text>
<text x="755.5" y="257" font-size="12" fill="#444444" text-anchor="middle">M</text>
<text x="808.0" y="257" font-size="12" fill="#444444" text-anchor="middle">N</text>
<text x="858.5" y="257" font-size="12" fill="#444444" text-anchor="middle">O</text>
<text x="923.5" y="257" font-size="12" fill="#444444" text-anchor="middle">P</text>
<text x="997.0" y="257" font-size="12" fill="#444444" text-anchor="middle">Q</text>
<text x="1068.0" y="257" font-size="12" fill="#444444" text-anchor="middle">R</text>
<text x="1139.0" y="257" font-size="12" fill="#217346" text-anchor="middle">S</text>
<text x="1207.5" y="257" font-size="12" fill="#444444" text-anchor="middle">AR</text>
<text x="1270.5" y="257" font-size="12" fill="#444444" text-anchor="middle">AS</text>
<text x="1334.5" y="257" font-size="12" fill="#444444" text-anchor="middle">AT</text>
<rect x="1174" y="289" width="170" height="1" fill="#d4d4d4"/>
<rect x="1174" y="328" width="170" height="1" fill="#d4d4d4"/>
<rect x="1174" y="348" width="170" height="1" fill="#d4d4d4"/>
<rect x="1174" y="368" width="170" height="1" fill="#d4d4d4"/>
<rect x="1174" y="388" width="170" height="1" fill="#d4d4d4"/>
<rect x="1174" y="408" width="170" height="1" fill="#d4d4d4"/>
<rect x="1174" y="428" width="170" height="1" fill="#d4d4d4"/>
<rect x="1174" y="448" width="170" height="1" fill="#d4d4d4"/>
<rect x="1174" y="468" width="170" height="1" fill="#d4d4d4"/>
<rect x="1174" y="488" width="170" height="1" fill="#d4d4d4"/>
<rect x="1174" y="508" width="170" height="1" fill="#d4d4d4"/>
<rect x="1174" y="528" width="170" height="1" fill="#d4d4d4"/>
<rect x="1174" y="548" width="170" height="1" fill="#d4d4d4"/>
<rect x="1174" y="568" width="170" height="1" fill="#d4d4d4"/>
<rect x="1174" y="588" width="170" height="1" fill="#d4d4d4"/>
<rect x="1174" y="608" width="170" height="1" fill="#d4d4d4"/>
<rect x="1174" y="628" width="170" height="1" fill="#d4d4d4"/>
<rect x="1174" y="648" width="170" height="1" fill="#d4d4d4"/>
<rect x="1174" y="668" width="170" height="1" fill="#d4d4d4"/>
<rect x="1174" y="263" width="1" height="407" fill="#d4d4d4"/>
<rect x="1238" y="263" width="1" height="407" fill="#d4d4d4"/>
<rect x="1302" y="263" width="1" height="407" fill="#d4d4d4"/>
<rect x="1344" y="263" width="1" height="407" fill="#c6c6c6"/>
<rect x="26" y="668" width="1319" height="1" fill="#d4d4d4"/>
<rect x="0" y="289" width="25" height="1" fill="#e1e1e1"/>
<rect x="0" y="328" width="25" height="1" fill="#e1e1e1"/>
<rect x="0" y="348" width="25" height="1" fill="#e1e1e1"/>
<rect x="0" y="368" width="25" height="1" fill="#e1e1e1"/>
<rect x="0" y="388" width="25" height="1" fill="#e1e1e1"/>
<rect x="0" y="408" width="25" height="1" fill="#e1e1e1"/>
<rect x="0" y="428" width="25" height="1" fill="#e1e1e1"/>
<rect x="0" y="448" width="25" height="1" fill="#e1e1e1"/>
<rect x="0" y="468" width="25" height="1" fill="#e1e1e1"/>
<rect x="0" y="488" width="25" height="1" fill="#e1e1e1"/>
<rect x="0" y="508" width="25" height="1" fill="#e1e1e1"/>
<rect x="0" y="528" width="25" height="1" fill="#e1e1e1"/>
<rect x="0" y="548" width="25" height="1" fill="#e1e1e1"/>
<rect x="0" y="568" width="25" height="1" fill="#e1e1e1"/>
<rect x="0" y="588" width="25" height="1" fill="#e1e1e1"/>
<rect x="0" y="608" width="25" height="1" fill="#e1e1e1"/>
<rect x="0" y="628" width="25" height="1" fill="#e1e1e1"/>
<rect x="0" y="648" width="25" height="1" fill="#e1e1e1"/>
<rect x="0" y="668" width="25" height="1" fill="#e1e1e1"/>
<text x="12.5" y="284" font-size="12" fill="#444444" text-anchor="middle">1</text>
<text x="12.5" y="323.5" font-size="12" fill="#444444" text-anchor="middle">2</text>
<text x="12.5" y="344" font-size="12" fill="#444444" text-anchor="middle">3</text>
<text x="12.5" y="364" font-size="12" fill="#444444" text-anchor="middle">4</text>
<text x="12.5" y="384" font-size="12" fill="#444444" text-anchor="middle">5</text>
<text x="12.5" y="404" font-size="12" fill="#444444" text-anchor="middle">6</text>
<text x="12.5" y="424" font-size="12" fill="#444444" text-anchor="middle">7</text>
<text x="12.5" y="444" font-size="12" fill="#444444" text-anchor="middle">8</text>
<text x="12.5" y="464" font-size="12" fill="#444444" text-anchor="middle">9</text>
<text x="12.5" y="484" font-size="12" fill="#444444" text-anchor="middle">10</text>
<text x="12.5" y="504" font-size="12" fill="#444444" text-anchor="middle">11</text>
<text x="12.5" y="524" font-size="12" fill="#444444" text-anchor="middle">12</text>
<text x="12.5" y="544" font-size="12" fill="#444444" text-anchor="middle">13</text>
<text x="12.5" y="564" font-size="12" fill="#444444" text-anchor="middle">14</text>
<text x="12.5" y="584" font-size="12" fill="#444444" text-anchor="middle">15</text>
<text x="12.5" y="604" font-size="12" fill="#444444" text-anchor="middle">16</text>
<text x="12.5" y="624" font-size="12" fill="#444444" text-anchor="middle">17</text>
<text x="12.5" y="644" font-size="12" fill="#444444" text-anchor="middle">18</text>
<text x="12.5" y="664" font-size="12" fill="#444444" text-anchor="middle">19</text>
<text x="301" y="284" font-size="20" fill="#000" font-weight="bold" textLength="199" lengthAdjust="spacingAndGlyphs">Tiempos trabajados</text>
<rect x="25" y="289" width="1150" height="1" fill="#000000"/>
<rect x="25" y="328" width="1150" height="1" fill="#000000"/>
<rect x="25" y="348" width="1150" height="1" fill="#000000"/>
<rect x="25" y="368" width="1150" height="1" fill="#000000"/>
<rect x="25" y="388" width="1150" height="1" fill="#000000"/>
<rect x="25" y="408" width="1150" height="1" fill="#000000"/>
<rect x="25" y="428" width="1150" height="1" fill="#000000"/>
<rect x="25" y="448" width="1150" height="1" fill="#000000"/>
<rect x="25" y="468" width="1150" height="1" fill="#000000"/>
<rect x="25" y="488" width="1150" height="1" fill="#000000"/>
<rect x="25" y="508" width="1150" height="1" fill="#000000"/>
<rect x="25" y="528" width="1150" height="1" fill="#000000"/>
<rect x="25" y="548" width="1150" height="1" fill="#000000"/>
<rect x="25" y="568" width="1150" height="1" fill="#000000"/>
<rect x="25" y="588" width="1150" height="1" fill="#000000"/>
<rect x="25" y="608" width="1150" height="1" fill="#000000"/>
<rect x="25" y="628" width="1150" height="1" fill="#000000"/>
<rect x="25" y="648" width="1150" height="1" fill="#000000"/>
<rect x="25" y="668" width="1150" height="1" fill="#000000"/>
<rect x="125" y="289" width="1" height="381" fill="#000000"/>
<rect x="206" y="289" width="1" height="381" fill="#000000"/>
<rect x="290" y="289" width="1" height="381" fill="#000000"/>
<rect x="392" y="289" width="1" height="381" fill="#000000"/>
<rect x="450" y="289" width="1" height="381" fill="#000000"/>
<rect x="497" y="289" width="1" height="381" fill="#000000"/>
<rect x="569" y="289" width="1" height="381" fill="#000000"/>
<rect x="664" y="289" width="1" height="381" fill="#000000"/>
<rect x="726" y="289" width="1" height="381" fill="#000000"/>
<rect x="784" y="289" width="1" height="381" fill="#000000"/>
<rect x="831" y="289" width="1" height="381" fill="#000000"/>
<rect x="885" y="289" width="1" height="381" fill="#000000"/>
<rect x="961" y="289" width="1" height="381" fill="#000000"/>
<rect x="1032" y="289" width="1" height="381" fill="#000000"/>
<rect x="1103" y="289" width="1" height="381" fill="#000000"/>
<rect x="1174" y="289" width="1" height="381" fill="#000000"/>
<text x="28.2" y="323.8" font-size="15.5" fill="#000" textLength="92.48" lengthAdjust="spacingAndGlyphs">Departamento</text>
<text x="128.2" y="323.8" font-size="15.5" fill="#000" textLength="40.39" lengthAdjust="spacingAndGlyphs">Fecha</text>
<text x="293.2" y="323.8" font-size="15.5" fill="#000" textLength="48.05" lengthAdjust="spacingAndGlyphs">Horario</text>
<text x="395.2" y="323.8" font-size="15.5" fill="#000" textLength="51.19" lengthAdjust="spacingAndGlyphs">Entrada</text>
<text x="453.2" y="323.8" font-size="15.5" fill="#000" textLength="40.39" lengthAdjust="spacingAndGlyphs">Salida</text>
<text x="729.2" y="323.8" font-size="15.5" fill="#000" textLength="51.19" lengthAdjust="spacingAndGlyphs">Entrada</text>
<text x="787.2" y="323.8" font-size="15.5" fill="#000" textLength="40.39" lengthAdjust="spacingAndGlyphs">Salida</text>
<text x="209.2" y="304" font-size="15.5" fill="#000" textLength="65.93" lengthAdjust="spacingAndGlyphs">Asistencia</text>
<text x="209.2" y="323.5" font-size="15.5" fill="#000" textLength="38.16" lengthAdjust="spacingAndGlyphs">Diaria</text>
<text x="500.2" y="304" font-size="15.5" fill="#000" textLength="39.07" lengthAdjust="spacingAndGlyphs">Horas</text>
<text x="500.2" y="323.5" font-size="15.5" fill="#000" textLength="58.77" lengthAdjust="spacingAndGlyphs">laborales</text>
<text x="572.2" y="304" font-size="15.5" fill="#000" textLength="81.68" lengthAdjust="spacingAndGlyphs">Duración del</text>
<text x="572.2" y="323.5" font-size="15.5" fill="#000" textLength="61.9" lengthAdjust="spacingAndGlyphs">descanso</text>
<text x="667.2" y="304" font-size="15.5" fill="#000" textLength="33.98" lengthAdjust="spacingAndGlyphs">Work</text>
<text x="667.2" y="323.5" font-size="15.5" fill="#000" textLength="23.33" lengthAdjust="spacingAndGlyphs">day</text>
<text x="834.2" y="304" font-size="15.5" fill="#000" textLength="31.49" lengthAdjust="spacingAndGlyphs">Total</text>
<text x="834.2" y="323.5" font-size="15.5" fill="#000" textLength="39.07" lengthAdjust="spacingAndGlyphs">Horas</text>
<text x="888.2" y="304" font-size="15.5" fill="#000" textLength="39.07" lengthAdjust="spacingAndGlyphs">Horas</text>
<text x="888.2" y="323.5" font-size="15.5" fill="#000" textLength="67.75" lengthAdjust="spacingAndGlyphs">trabajadas</text>
<text x="964.2" y="304" font-size="15.5" fill="#000" textLength="40.39" lengthAdjust="spacingAndGlyphs">Salida</text>
<text x="964.2" y="323.5" font-size="15.5" fill="#000" textLength="61.9" lengthAdjust="spacingAndGlyphs">descanso</text>
<text x="1035.2" y="304" font-size="15.5" fill="#000" textLength="51.19" lengthAdjust="spacingAndGlyphs">Entrada</text>
<text x="1035.2" y="323.5" font-size="15.5" fill="#000" textLength="61.9" lengthAdjust="spacingAndGlyphs">descanso</text>
<text x="1106.2" y="304" font-size="15.5" fill="#000" textLength="59.26" lengthAdjust="spacingAndGlyphs">Horas de</text>
<text x="1106.2" y="323.5" font-size="15.5" fill="#000" textLength="61.9" lengthAdjust="spacingAndGlyphs">descanso</text>
<text x="28.2" y="344" font-size="15.5" fill="#000" textLength="85.25" lengthAdjust="spacingAndGlyphs">OPERATIVO</text>
<text x="128.2" y="344" font-size="15.5" fill="#000" textLength="74.52" lengthAdjust="spacingAndGlyphs">2024-08-01</text>
<text x="209.2" y="344" font-size="15.5" fill="#000" textLength="45.74" lengthAdjust="spacingAndGlyphs">Jueves</text>
<rect x="291" y="329" width="101" height="19" fill="#1152c4"/>
<text x="293.2" y="344" font-size="15.5" fill="#ffffff" textLength="95.14" lengthAdjust="spacingAndGlyphs">OPERATIVOS</text>
<text x="395.2" y="344" font-size="15.5" fill="#000" textLength="36.36" lengthAdjust="spacingAndGlyphs">08:00</text>
<text x="453.2" y="344" font-size="15.5" fill="#000" textLength="36.36" lengthAdjust="spacingAndGlyphs">17:00</text>
<text x="500.2" y="344" font-size="15.5" fill="#000" textLength="36.36" lengthAdjust="spacingAndGlyphs">08:00</text>
<text x="572.2" y="344" font-size="15.5" fill="#000" textLength="36.36" lengthAdjust="spacingAndGlyphs">01:00</text>
<text x="667.2" y="344" font-size="15.5" fill="#000" textLength="20.2" lengthAdjust="spacingAndGlyphs">1.0</text>
<text x="729.2" y="344" font-size="15.5" fill="#000" textLength="36.36" lengthAdjust="spacingAndGlyphs">07:58</text>
<text x="787.2" y="344" font-size="15.5" fill="#000" textLength="36.36" lengthAdjust="spacingAndGlyphs">16:54</text>
<text x="834.2" y="344" font-size="15.5" fill="#000" textLength="36.36" lengthAdjust="spacingAndGlyphs">08:56</text>
<text x="888.2" y="344" font-size="15.5" fill="#000" textLength="36.36" lengthAdjust="spacingAndGlyphs">07:55</text>
<text x="964.2" y="344" font-size="15.5" fill="#000" textLength="36.36" lengthAdjust="spacingAndGlyphs">13:00</text>
<text x="1035.2" y="344" font-size="15.5" fill="#000" textLength="36.36" lengthAdjust="spacingAndGlyphs">13:55</text>
<text x="1106.2" y="344" font-size="15.5" fill="#000" textLength="36.36" lengthAdjust="spacingAndGlyphs">01:00</text>
<text x="28.2" y="364" font-size="15.5" fill="#000" textLength="85.25" lengthAdjust="spacingAndGlyphs">OPERATIVO</text>
<text x="128.2" y="364" font-size="15.5" fill="#000" textLength="74.52" lengthAdjust="spacingAndGlyphs">2024-08-02</text>
<text x="209.2" y="364" font-size="15.5" fill="#000" textLength="49.24" lengthAdjust="spacingAndGlyphs">Viernes</text>
<rect x="291" y="349" width="101" height="19" fill="#1152c4"/>
<text x="293.2" y="364" font-size="15.5" fill="#ffffff" textLength="95.14" lengthAdjust="spacingAndGlyphs">OPERATIVOS</text>
<text x="395.2" y="364" font-size="15.5" fill="#000" textLength="36.36" lengthAdjust="spacingAndGlyphs">08:00</text>
<text x="453.2" y="364" font-size="15.5" fill="#000" textLength="36.36" lengthAdjust="spacingAndGlyphs">17:00</text>
<text x="500.2" y="364" font-size="15.5" fill="#000" textLength="36.36" lengthAdjust="spacingAndGlyphs">08:00</text>
<text x="572.2" y="364" font-size="15.5" fill="#000" textLength="36.36" lengthAdjust="spacingAndGlyphs">01:00</text>
<text x="667.2" y="364" font-size="15.5" fill="#000" textLength="20.2" lengthAdjust="spacingAndGlyphs">1.0</text>
<text x="729.2" y="364" font-size="15.5" fill="#000" textLength="36.36" lengthAdjust="spacingAndGlyphs">07:59</text>
<text x="787.2" y="364" font-size="15.5" fill="#000" textLength="36.36" lengthAdjust="spacingAndGlyphs">17:00</text>
<text x="834.2" y="364" font-size="15.5" fill="#000" textLength="36.36" lengthAdjust="spacingAndGlyphs">09:01</text>
<text x="888.2" y="364" font-size="15.5" fill="#000" textLength="36.36" lengthAdjust="spacingAndGlyphs">08:00</text>
<text x="964.2" y="364" font-size="15.5" fill="#000" textLength="36.36" lengthAdjust="spacingAndGlyphs">13:00</text>
<text x="1035.2" y="364" font-size="15.5" fill="#000" textLength="36.36" lengthAdjust="spacingAndGlyphs">14:00</text>
<text x="1106.2" y="364" font-size="15.5" fill="#000" textLength="36.36" lengthAdjust="spacingAndGlyphs">01:00</text>
<text x="28.2" y="384" font-size="15.5" fill="#000" textLength="85.25" lengthAdjust="spacingAndGlyphs">OPERATIVO</text>
<text x="128.2" y="384" font-size="15.5" fill="#000" textLength="74.52" lengthAdjust="spacingAndGlyphs">2024-08-03</text>
<text x="209.2" y="384" font-size="15.5" fill="#000" textLength="50.29" lengthAdjust="spacingAndGlyphs">Sábado</text>
<text x="395.2" y="384" font-size="15.5" fill="#000" textLength="36.36" lengthAdjust="spacingAndGlyphs">00:00</text>
<text x="453.2" y="384" font-size="15.5" fill="#000" textLength="36.36" lengthAdjust="spacingAndGlyphs">00:00</text>
<text x="667.2" y="384" font-size="15.5" fill="#000" textLength="20.2" lengthAdjust="spacingAndGlyphs">1.0</text>
<text x="28.2" y="404" font-size="15.5" fill="#000" textLength="85.25" lengthAdjust="spacingAndGlyphs">OPERATIVO</text>
<text x="128.2" y="404" font-size="15.5" fill="#000" textLength="74.52" lengthAdjust="spacingAndGlyphs">2024-08-04</text>
<text x="209.2" y="404" font-size="15.5" fill="#000" textLength="58.35" lengthAdjust="spacingAndGlyphs">Domingo</text>
<text x="395.2" y="404" font-size="15.5" fill="#000" textLength="36.36" lengthAdjust="spacingAndGlyphs">00:00</text>
<text x="453.2" y="404" font-size="15.5" fill="#000" textLength="36.36" lengthAdjust="spacingAndGlyphs">00:00</text>
<text x="667.2" y="404" font-size="15.5" fill="#000" textLength="20.2" lengthAdjust="spacingAndGlyphs">1.0</text>
<text x="28.2" y="424" font-size="15.5" fill="#000" textLength="85.25" lengthAdjust="spacingAndGlyphs">OPERATIVO</text>
<text x="128.2" y="424" font-size="15.5" fill="#000" textLength="74.52" lengthAdjust="spacingAndGlyphs">2024-08-05</text>
<text x="209.2" y="424" font-size="15.5" fill="#000" textLength="39.49" lengthAdjust="spacingAndGlyphs">Lunes</text>
<rect x="291" y="409" width="101" height="19" fill="#1152c4"/>
<text x="293.2" y="424" font-size="15.5" fill="#ffffff" textLength="95.14" lengthAdjust="spacingAndGlyphs">OPERATIVOS</text>
<text x="395.2" y="424" font-size="15.5" fill="#000" textLength="36.36" lengthAdjust="spacingAndGlyphs">08:00</text>
<text x="453.2" y="424" font-size="15.5" fill="#000" textLength="36.36" lengthAdjust="spacingAndGlyphs">17:00</text>
<text x="500.2" y="424" font-size="15.5" fill="#000" textLength="36.36" lengthAdjust="spacingAndGlyphs">08:00</text>
<text x="572.2" y="424" font-size="15.5" fill="#000" textLength="36.36" lengthAdjust="spacingAndGlyphs">01:00</text>
<text x="667.2" y="424" font-size="15.5" fill="#000" textLength="20.2" lengthAdjust="spacingAndGlyphs">1.0</text>
<text x="729.2" y="424" font-size="15.5" fill="#000" textLength="36.36" lengthAdjust="spacingAndGlyphs">07:58</text>
<text x="787.2" y="424" font-size="15.5" fill="#000" textLength="36.36" lengthAdjust="spacingAndGlyphs">17:47</text>
<text x="834.2" y="424" font-size="15.5" fill="#000" textLength="36.36" lengthAdjust="spacingAndGlyphs">09:48</text>
<text x="888.2" y="424" font-size="15.5" fill="#000" textLength="36.36" lengthAdjust="spacingAndGlyphs">08:00</text>
<text x="964.2" y="424" font-size="15.5" fill="#000" textLength="36.36" lengthAdjust="spacingAndGlyphs">13:00</text>
<text x="1106.2" y="424" font-size="15.5" fill="#000" textLength="36.36" lengthAdjust="spacingAndGlyphs">01:00</text>
<text x="28.2" y="444" font-size="15.5" fill="#000" textLength="85.25" lengthAdjust="spacingAndGlyphs">OPERATIVO</text>
<text x="128.2" y="444" font-size="15.5" fill="#000" textLength="74.52" lengthAdjust="spacingAndGlyphs">2024-08-06</text>
<text x="209.2" y="444" font-size="15.5" fill="#000" textLength="44.42" lengthAdjust="spacingAndGlyphs">Martes</text>
<rect x="291" y="429" width="101" height="19" fill="#1152c4"/>
<text x="293.2" y="444" font-size="15.5" fill="#ffffff" textLength="95.14" lengthAdjust="spacingAndGlyphs">OPERATIVOS</text>
<text x="395.2" y="444" font-size="15.5" fill="#000" textLength="36.36" lengthAdjust="spacingAndGlyphs">08:00</text>
<text x="453.2" y="444" font-size="15.5" fill="#000" textLength="36.36" lengthAdjust="spacingAndGlyphs">17:00</text>
<text x="500.2" y="444" font-size="15.5" fill="#000" textLength="36.36" lengthAdjust="spacingAndGlyphs">08:00</text>
<text x="572.2" y="444" font-size="15.5" fill="#000" textLength="36.36" lengthAdjust="spacingAndGlyphs">01:00</text>
<text x="667.2" y="444" font-size="15.5" fill="#000" textLength="20.2" lengthAdjust="spacingAndGlyphs">1.0</text>
<text x="729.2" y="444" font-size="15.5" fill="#000" textLength="36.36" lengthAdjust="spacingAndGlyphs">08:01</text>
<text x="787.2" y="444" font-size="15.5" fill="#000" textLength="36.36" lengthAdjust="spacingAndGlyphs">16:53</text>
<text x="834.2" y="444" font-size="15.5" fill="#000" textLength="36.36" lengthAdjust="spacingAndGlyphs">08:52</text>
<text x="888.2" y="444" font-size="15.5" fill="#000" textLength="36.36" lengthAdjust="spacingAndGlyphs">07:53</text>
<text x="964.2" y="444" font-size="15.5" fill="#000" textLength="36.36" lengthAdjust="spacingAndGlyphs">13:00</text>
<text x="1106.2" y="444" font-size="15.5" fill="#000" textLength="36.36" lengthAdjust="spacingAndGlyphs">01:00</text>
<text x="28.2" y="464" font-size="15.5" fill="#000" textLength="85.25" lengthAdjust="spacingAndGlyphs">OPERATIVO</text>
<text x="128.2" y="464" font-size="15.5" fill="#000" textLength="74.52" lengthAdjust="spacingAndGlyphs">2024-08-07</text>
<text x="209.2" y="464" font-size="15.5" fill="#000" textLength="61.89" lengthAdjust="spacingAndGlyphs">Miércoles</text>
<rect x="291" y="449" width="101" height="19" fill="#1152c4"/>
<text x="293.2" y="464" font-size="15.5" fill="#ffffff" textLength="95.14" lengthAdjust="spacingAndGlyphs">OPERATIVOS</text>
<text x="395.2" y="464" font-size="15.5" fill="#000" textLength="36.36" lengthAdjust="spacingAndGlyphs">08:00</text>
<text x="453.2" y="464" font-size="15.5" fill="#000" textLength="36.36" lengthAdjust="spacingAndGlyphs">17:00</text>
<text x="500.2" y="464" font-size="15.5" fill="#000" textLength="36.36" lengthAdjust="spacingAndGlyphs">08:00</text>
<text x="572.2" y="464" font-size="15.5" fill="#000" textLength="36.36" lengthAdjust="spacingAndGlyphs">01:00</text>
<text x="667.2" y="464" font-size="15.5" fill="#000" textLength="20.2" lengthAdjust="spacingAndGlyphs">1.0</text>
<text x="729.2" y="464" font-size="15.5" fill="#000" textLength="36.36" lengthAdjust="spacingAndGlyphs">08:00</text>
<text x="787.2" y="464" font-size="15.5" fill="#000" textLength="36.36" lengthAdjust="spacingAndGlyphs">16:59</text>
<text x="834.2" y="464" font-size="15.5" fill="#000" textLength="36.36" lengthAdjust="spacingAndGlyphs">08:59</text>
<text x="888.2" y="464" font-size="15.5" fill="#000" textLength="36.36" lengthAdjust="spacingAndGlyphs">08:00</text>
<text x="964.2" y="464" font-size="15.5" fill="#000" textLength="36.36" lengthAdjust="spacingAndGlyphs">13:00</text>
<text x="1106.2" y="464" font-size="15.5" fill="#000" textLength="36.36" lengthAdjust="spacingAndGlyphs">01:00</text>
<text x="28.2" y="484" font-size="15.5" fill="#000" textLength="85.25" lengthAdjust="spacingAndGlyphs">OPERATIVO</text>
<text x="128.2" y="484" font-size="15.5" fill="#000" textLength="74.52" lengthAdjust="spacingAndGlyphs">2024-08-08</text>
<text x="209.2" y="484" font-size="15.5" fill="#000" textLength="45.74" lengthAdjust="spacingAndGlyphs">Jueves</text>
<rect x="291" y="469" width="101" height="19" fill="#1152c4"/>
<text x="293.2" y="484" font-size="15.5" fill="#ffffff" textLength="95.14" lengthAdjust="spacingAndGlyphs">OPERATIVOS</text>
<text x="395.2" y="484" font-size="15.5" fill="#000" textLength="36.36" lengthAdjust="spacingAndGlyphs">08:00</text>
<text x="453.2" y="484" font-size="15.5" fill="#000" textLength="36.36" lengthAdjust="spacingAndGlyphs">17:00</text>
<text x="500.2" y="484" font-size="15.5" fill="#000" textLength="36.36" lengthAdjust="spacingAndGlyphs">08:00</text>
<text x="572.2" y="484" font-size="15.5" fill="#000" textLength="36.36" lengthAdjust="spacingAndGlyphs">01:00</text>
<text x="667.2" y="484" font-size="15.5" fill="#000" textLength="20.2" lengthAdjust="spacingAndGlyphs">1.0</text>
<text x="729.2" y="484" font-size="15.5" fill="#000" textLength="36.36" lengthAdjust="spacingAndGlyphs">08:01</text>
<text x="787.2" y="484" font-size="15.5" fill="#000" textLength="36.36" lengthAdjust="spacingAndGlyphs">16:57</text>
<text x="834.2" y="484" font-size="15.5" fill="#000" textLength="36.36" lengthAdjust="spacingAndGlyphs">08:56</text>
<text x="888.2" y="484" font-size="15.5" fill="#000" textLength="36.36" lengthAdjust="spacingAndGlyphs">07:57</text>
<text x="964.2" y="484" font-size="15.5" fill="#000" textLength="36.36" lengthAdjust="spacingAndGlyphs">13:00</text>
<text x="1106.2" y="484" font-size="15.5" fill="#000" textLength="36.36" lengthAdjust="spacingAndGlyphs">01:00</text>
<text x="28.2" y="504" font-size="15.5" fill="#000" textLength="85.25" lengthAdjust="spacingAndGlyphs">OPERATIVO</text>
<text x="128.2" y="504" font-size="15.5" fill="#000" textLength="74.52" lengthAdjust="spacingAndGlyphs">2024-08-09</text>
<text x="209.2" y="504" font-size="15.5" fill="#000" textLength="49.24" lengthAdjust="spacingAndGlyphs">Viernes</text>
<rect x="291" y="489" width="101" height="19" fill="#1152c4"/>
<text x="293.2" y="504" font-size="15.5" fill="#ffffff" textLength="95.14" lengthAdjust="spacingAndGlyphs">OPERATIVOS</text>
<text x="395.2" y="504" font-size="15.5" fill="#000" textLength="36.36" lengthAdjust="spacingAndGlyphs">08:00</text>
<text x="453.2" y="504" font-size="15.5" fill="#000" textLength="36.36" lengthAdjust="spacingAndGlyphs">17:00</text>
<text x="500.2" y="504" font-size="15.5" fill="#000" textLength="36.36" lengthAdjust="spacingAndGlyphs">08:00</text>
<text x="572.2" y="504" font-size="15.5" fill="#000" textLength="36.36" lengthAdjust="spacingAndGlyphs">01:00</text>
<text x="667.2" y="504" font-size="15.5" fill="#000" textLength="20.2" lengthAdjust="spacingAndGlyphs">1.0</text>
<text x="888.2" y="504" font-size="15.5" fill="#000" textLength="36.36" lengthAdjust="spacingAndGlyphs">01:00</text>
<text x="1106.2" y="504" font-size="15.5" fill="#000" textLength="36.36" lengthAdjust="spacingAndGlyphs">01:00</text>
<text x="28.2" y="524" font-size="15.5" fill="#000" textLength="85.25" lengthAdjust="spacingAndGlyphs">OPERATIVO</text>
<text x="128.2" y="524" font-size="15.5" fill="#000" textLength="74.52" lengthAdjust="spacingAndGlyphs">2024-08-10</text>
<text x="209.2" y="524" font-size="15.5" fill="#000" textLength="50.29" lengthAdjust="spacingAndGlyphs">Sábado</text>
<text x="395.2" y="524" font-size="15.5" fill="#000" textLength="36.36" lengthAdjust="spacingAndGlyphs">00:00</text>
<text x="453.2" y="524" font-size="15.5" fill="#000" textLength="36.36" lengthAdjust="spacingAndGlyphs">00:00</text>
<text x="667.2" y="524" font-size="15.5" fill="#000" textLength="20.2" lengthAdjust="spacingAndGlyphs">1.0</text>
<text x="28.2" y="544" font-size="15.5" fill="#000" textLength="85.25" lengthAdjust="spacingAndGlyphs">OPERATIVO</text>
<text x="128.2" y="544" font-size="15.5" fill="#000" textLength="73.98" lengthAdjust="spacingAndGlyphs">2024-08-11</text>
<text x="209.2" y="544" font-size="15.5" fill="#000" textLength="58.35" lengthAdjust="spacingAndGlyphs">Domingo</text>
<text x="395.2" y="544" font-size="15.5" fill="#000" textLength="36.36" lengthAdjust="spacingAndGlyphs">00:00</text>
<text x="453.2" y="544" font-size="15.5" fill="#000" textLength="36.36" lengthAdjust="spacingAndGlyphs">00:00</text>
<text x="667.2" y="544" font-size="15.5" fill="#000" textLength="20.2" lengthAdjust="spacingAndGlyphs">1.0</text>
<text x="28.2" y="564" font-size="15.5" fill="#000" textLength="85.25" lengthAdjust="spacingAndGlyphs">OPERATIVO</text>
<text x="128.2" y="564" font-size="15.5" fill="#000" textLength="74.52" lengthAdjust="spacingAndGlyphs">2024-08-12</text>
<text x="209.2" y="564" font-size="15.5" fill="#000" textLength="39.49" lengthAdjust="spacingAndGlyphs">Lunes</text>
<rect x="291" y="549" width="101" height="19" fill="#1152c4"/>
<text x="293.2" y="564" font-size="15.5" fill="#ffffff" textLength="95.14" lengthAdjust="spacingAndGlyphs">OPERATIVOS</text>
<text x="395.2" y="564" font-size="15.5" fill="#000" textLength="36.36" lengthAdjust="spacingAndGlyphs">08:00</text>
<text x="453.2" y="564" font-size="15.5" fill="#000" textLength="36.36" lengthAdjust="spacingAndGlyphs">17:00</text>
<text x="500.2" y="564" font-size="15.5" fill="#000" textLength="36.36" lengthAdjust="spacingAndGlyphs">08:00</text>
<text x="572.2" y="564" font-size="15.5" fill="#000" textLength="36.36" lengthAdjust="spacingAndGlyphs">01:00</text>
<text x="667.2" y="564" font-size="15.5" fill="#000" textLength="20.2" lengthAdjust="spacingAndGlyphs">1.0</text>
<text x="729.2" y="564" font-size="15.5" fill="#000" textLength="36.36" lengthAdjust="spacingAndGlyphs">08:06</text>
<text x="787.2" y="564" font-size="15.5" fill="#000" textLength="36.36" lengthAdjust="spacingAndGlyphs">16:55</text>
<text x="834.2" y="564" font-size="15.5" fill="#000" textLength="36.36" lengthAdjust="spacingAndGlyphs">08:48</text>
<text x="888.2" y="564" font-size="15.5" fill="#000" textLength="36.36" lengthAdjust="spacingAndGlyphs">07:50</text>
<text x="964.2" y="564" font-size="15.5" fill="#000" textLength="36.36" lengthAdjust="spacingAndGlyphs">13:00</text>
<text x="1106.2" y="564" font-size="15.5" fill="#000" textLength="36.36" lengthAdjust="spacingAndGlyphs">01:00</text>
<text x="28.2" y="584" font-size="15.5" fill="#000" textLength="85.25" lengthAdjust="spacingAndGlyphs">OPERATIVO</text>
<text x="128.2" y="584" font-size="15.5" fill="#000" textLength="74.52" lengthAdjust="spacingAndGlyphs">2024-08-13</text>
<text x="209.2" y="584" font-size="15.5" fill="#000" textLength="44.42" lengthAdjust="spacingAndGlyphs">Martes</text>
<rect x="291" y="569" width="101" height="19" fill="#1152c4"/>
<text x="293.2" y="584" font-size="15.5" fill="#ffffff" textLength="95.14" lengthAdjust="spacingAndGlyphs">OPERATIVOS</text>
<text x="395.2" y="584" font-size="15.5" fill="#000" textLength="36.36" lengthAdjust="spacingAndGlyphs">08:00</text>
<text x="453.2" y="584" font-size="15.5" fill="#000" textLength="36.36" lengthAdjust="spacingAndGlyphs">17:00</text>
<text x="500.2" y="584" font-size="15.5" fill="#000" textLength="36.36" lengthAdjust="spacingAndGlyphs">08:00</text>
<text x="572.2" y="584" font-size="15.5" fill="#000" textLength="36.36" lengthAdjust="spacingAndGlyphs">01:00</text>
<text x="667.2" y="584" font-size="15.5" fill="#000" textLength="20.2" lengthAdjust="spacingAndGlyphs">1.0</text>
<text x="729.2" y="584" font-size="15.5" fill="#000" textLength="36.36" lengthAdjust="spacingAndGlyphs">08:01</text>
<text x="787.2" y="584" font-size="15.5" fill="#000" textLength="36.36" lengthAdjust="spacingAndGlyphs">17:00</text>
<text x="834.2" y="584" font-size="15.5" fill="#000" textLength="36.36" lengthAdjust="spacingAndGlyphs">08:58</text>
<text x="888.2" y="584" font-size="15.5" fill="#000" textLength="36.36" lengthAdjust="spacingAndGlyphs">07:59</text>
<text x="964.2" y="584" font-size="15.5" fill="#000" textLength="36.36" lengthAdjust="spacingAndGlyphs">13:00</text>
<text x="1106.2" y="584" font-size="15.5" fill="#000" textLength="36.36" lengthAdjust="spacingAndGlyphs">01:00</text>
<text x="28.2" y="604" font-size="15.5" fill="#000" textLength="85.25" lengthAdjust="spacingAndGlyphs">OPERATIVO</text>
<text x="128.2" y="604" font-size="15.5" fill="#000" textLength="74.52" lengthAdjust="spacingAndGlyphs">2024-08-14</text>
<text x="209.2" y="604" font-size="15.5" fill="#000" textLength="61.89" lengthAdjust="spacingAndGlyphs">Miércoles</text>
<rect x="291" y="589" width="101" height="19" fill="#1152c4"/>
<text x="293.2" y="604" font-size="15.5" fill="#ffffff" textLength="95.14" lengthAdjust="spacingAndGlyphs">OPERATIVOS</text>
<text x="395.2" y="604" font-size="15.5" fill="#000" textLength="36.36" lengthAdjust="spacingAndGlyphs">08:00</text>
<text x="453.2" y="604" font-size="15.5" fill="#000" textLength="36.36" lengthAdjust="spacingAndGlyphs">17:00</text>
<text x="500.2" y="604" font-size="15.5" fill="#000" textLength="36.36" lengthAdjust="spacingAndGlyphs">08:00</text>
<text x="572.2" y="604" font-size="15.5" fill="#000" textLength="36.36" lengthAdjust="spacingAndGlyphs">01:00</text>
<text x="667.2" y="604" font-size="15.5" fill="#000" textLength="20.2" lengthAdjust="spacingAndGlyphs">1.0</text>
<text x="729.2" y="604" font-size="15.5" fill="#000" textLength="36.36" lengthAdjust="spacingAndGlyphs">07:54</text>
<text x="787.2" y="604" font-size="15.5" fill="#000" textLength="36.36" lengthAdjust="spacingAndGlyphs">16:47</text>
<text x="834.2" y="604" font-size="15.5" fill="#000" textLength="36.36" lengthAdjust="spacingAndGlyphs">08:52</text>
<text x="888.2" y="604" font-size="15.5" fill="#000" textLength="36.36" lengthAdjust="spacingAndGlyphs">07:48</text>
<text x="964.2" y="604" font-size="15.5" fill="#000" textLength="36.36" lengthAdjust="spacingAndGlyphs">13:00</text>
<text x="1106.2" y="604" font-size="15.5" fill="#000" textLength="36.36" lengthAdjust="spacingAndGlyphs">01:00</text>
<text x="28.2" y="624" font-size="15.5" fill="#000" textLength="85.25" lengthAdjust="spacingAndGlyphs">OPERATIVO</text>
<text x="128.2" y="624" font-size="15.5" fill="#000" textLength="74.52" lengthAdjust="spacingAndGlyphs">2024-08-15</text>
<text x="209.2" y="624" font-size="15.5" fill="#000" textLength="45.74" lengthAdjust="spacingAndGlyphs">Jueves</text>
<rect x="291" y="609" width="101" height="19" fill="#1152c4"/>
<text x="293.2" y="624" font-size="15.5" fill="#ffffff" textLength="95.14" lengthAdjust="spacingAndGlyphs">OPERATIVOS</text>
<text x="395.2" y="624" font-size="15.5" fill="#000" textLength="36.36" lengthAdjust="spacingAndGlyphs">08:00</text>
<text x="453.2" y="624" font-size="15.5" fill="#000" textLength="36.36" lengthAdjust="spacingAndGlyphs">17:00</text>
<text x="500.2" y="624" font-size="15.5" fill="#000" textLength="36.36" lengthAdjust="spacingAndGlyphs">08:00</text>
<text x="572.2" y="624" font-size="15.5" fill="#000" textLength="36.36" lengthAdjust="spacingAndGlyphs">01:00</text>
<text x="667.2" y="624" font-size="15.5" fill="#000" textLength="20.2" lengthAdjust="spacingAndGlyphs">1.0</text>
<text x="729.2" y="624" font-size="15.5" fill="#000" textLength="36.36" lengthAdjust="spacingAndGlyphs">08:01</text>
<text x="787.2" y="624" font-size="15.5" fill="#000" textLength="36.36" lengthAdjust="spacingAndGlyphs">16:57</text>
<text x="834.2" y="624" font-size="15.5" fill="#000" textLength="36.36" lengthAdjust="spacingAndGlyphs">08:56</text>
<text x="888.2" y="624" font-size="15.5" fill="#000" textLength="36.36" lengthAdjust="spacingAndGlyphs">07:57</text>
<text x="964.2" y="624" font-size="15.5" fill="#000" textLength="36.36" lengthAdjust="spacingAndGlyphs">13:00</text>
<text x="1106.2" y="624" font-size="15.5" fill="#000" textLength="36.36" lengthAdjust="spacingAndGlyphs">01:00</text>
<text x="28.2" y="644" font-size="15.5" fill="#000" textLength="85.25" lengthAdjust="spacingAndGlyphs">OPERATIVO</text>
<text x="128.2" y="644" font-size="15.5" fill="#000" textLength="74.52" lengthAdjust="spacingAndGlyphs">2024-08-16</text>
<text x="209.2" y="644" font-size="15.5" fill="#000" textLength="49.24" lengthAdjust="spacingAndGlyphs">Viernes</text>
<rect x="291" y="629" width="101" height="19" fill="#1152c4"/>
<text x="293.2" y="644" font-size="15.5" fill="#ffffff" textLength="95.14" lengthAdjust="spacingAndGlyphs">OPERATIVOS</text>
<text x="395.2" y="644" font-size="15.5" fill="#000" textLength="36.36" lengthAdjust="spacingAndGlyphs">08:00</text>
<text x="453.2" y="644" font-size="15.5" fill="#000" textLength="36.36" lengthAdjust="spacingAndGlyphs">17:00</text>
<text x="500.2" y="644" font-size="15.5" fill="#000" textLength="36.36" lengthAdjust="spacingAndGlyphs">08:00</text>
<text x="572.2" y="644" font-size="15.5" fill="#000" textLength="36.36" lengthAdjust="spacingAndGlyphs">01:00</text>
<text x="667.2" y="644" font-size="15.5" fill="#000" textLength="20.2" lengthAdjust="spacingAndGlyphs">1.0</text>
<text x="729.2" y="644" font-size="15.5" fill="#000" textLength="36.36" lengthAdjust="spacingAndGlyphs">08:00</text>
<text x="787.2" y="644" font-size="15.5" fill="#000" textLength="36.36" lengthAdjust="spacingAndGlyphs">17:00</text>
<text x="834.2" y="644" font-size="15.5" fill="#000" textLength="36.36" lengthAdjust="spacingAndGlyphs">08:59</text>
<text x="888.2" y="644" font-size="15.5" fill="#000" textLength="36.36" lengthAdjust="spacingAndGlyphs">08:00</text>
<text x="964.2" y="644" font-size="15.5" fill="#000" textLength="36.36" lengthAdjust="spacingAndGlyphs">13:00</text>
<text x="1106.2" y="644" font-size="15.5" fill="#000" textLength="36.36" lengthAdjust="spacingAndGlyphs">01:00</text>
<text x="28.2" y="664" font-size="15.5" fill="#000" textLength="85.25" lengthAdjust="spacingAndGlyphs">OPERATIVO</text>
<text x="128.2" y="664" font-size="15.5" fill="#000" textLength="74.52" lengthAdjust="spacingAndGlyphs">2024-08-17</text>
<text x="209.2" y="664" font-size="15.5" fill="#000" textLength="50.29" lengthAdjust="spacingAndGlyphs">Sábado</text>
<text x="395.2" y="664" font-size="15.5" fill="#000" textLength="36.36" lengthAdjust="spacingAndGlyphs">00:00</text>
<text x="453.2" y="664" font-size="15.5" fill="#000" textLength="36.36" lengthAdjust="spacingAndGlyphs">00:00</text>
<text x="667.2" y="664" font-size="15.5" fill="#000" textLength="20.2" lengthAdjust="spacingAndGlyphs">1.0</text>
<rect x="1345" y="243" width="21" height="427" fill="#ffffff"/>
<rect x="1347" y="244" width="16" height="426" fill="#f0f0f0"/>
<rect x="1348.5" y="245.5" width="14" height="14" fill="#fff" stroke="#a8a8a8" stroke-width="1"/>
<path d="M1351.5 255h8l-4-4z" fill="#222"/>
<rect x="1348.5" y="260.5" width="14" height="218" fill="#fff" stroke="#a8a8a8" stroke-width="1"/>
<rect x="1348.5" y="656.5" width="14" height="14" fill="#fff" stroke="#a8a8a8" stroke-width="1"/>
<path d="M1351.5 660.5h8l-4 4z" fill="#222"/>
<circle cx="1354.8" cy="360" r="18.5" fill="#000" opacity="0.06"/>
<circle cx="1354.6" cy="359.8" r="17.7" fill="#0a70e0"/>
<path d="M1343.0 353.9L1348.8 350.2L1354.6 353.9L1348.8 357.59999999999997z" fill="#fff"/>
<path d="M1355.2 353.9L1361 350.2L1366.8 353.9L1361 357.59999999999997z" fill="#fff"/>
<path d="M1343.0 363L1348.8 359.3L1354.6 363L1348.8 366.7z" fill="#fff"/>
<path d="M1355.2 363L1361 359.3L1366.8 363L1361 366.7z" fill="#fff"/>
<path d="M1349.2 368.2L1355 364.5L1360.8 368.2L1355 371.9z" fill="#fff"/>
<rect x="0" y="670" width="1366" height="29" fill="#f3f3f3"/>
<rect x="0" y="670" width="1345" height="1" fill="#c6c6c6"/>
<rect x="0" y="697" width="1366" height="2" fill="#fbfbfb"/>
<path d="M31 679.5v8l-4-4z" fill="#c3c3c3"/>
<path d="M57 679.5v8l4-4z" fill="#c3c3c3"/>
<rect x="100" y="669" width="80" height="24" fill="#ffffff"/>
<rect x="100" y="670" width="1" height="23" fill="#b9b9b9"/>
<rect x="179" y="670" width="1" height="23" fill="#b9b9b9"/>
<rect x="100" y="693" width="80" height="2" fill="#217346"/>
<text x="112.5" y="687.8" font-size="12.5" fill="#217346" font-weight="bold" textLength="55.5" lengthAdjust="spacingAndGlyphs">20240905</text>
<circle cx="220.9" cy="683.8" r="7.6" fill="none" stroke="#777" stroke-width="1"/>
<path d="M217.2 683.8h7.8 M221.1 680v7.8" fill="none" stroke="#666" stroke-width="1.8"/>
<rect x="806" y="670" width="28" height="27" fill="#ffffff"/>
<rect x="819" y="679" width="2" height="2" fill="#999"/>
<rect x="819" y="683" width="2" height="2" fill="#999"/>
<rect x="819" y="687" width="2" height="2" fill="#999"/>
<rect x="834" y="676" width="512" height="17" fill="#f0f0f0"/>
<rect x="836.5" y="677.5" width="14" height="14" fill="#fff" stroke="#a8a8a8" stroke-width="1"/>
<path d="M846 680.5v8l-4-4z" fill="#222"/>
<rect x="883.5" y="677.5" width="447" height="14" fill="#fff" stroke="#a8a8a8" stroke-width="1"/>
<rect x="1330.5" y="677.5" width="14" height="14" fill="#fff" stroke="#a8a8a8" stroke-width="1"/>
<path d="M1336 680.5v8l4-4z" fill="#222"/>
<rect x="0" y="699" width="1366" height="21" fill="#217346"/>
<text x="11" y="713.5" font-size="11" fill="#ffffff" textLength="23" lengthAdjust="spacingAndGlyphs">Listo</text>
<path d="M58.6 703.3A5.6 5.6 0 0 0 59.5 714.4" fill="none" stroke="#fff" stroke-width="1.3" stroke-dasharray="2.2 1.2"/>
<path d="M60.5 702v5.5" fill="none" stroke="#fff" stroke-width="1.2"/>
<path d="M58.2 706.6h4.6l-2.3 3z" fill="#fff"/>
<path d="M62 707.4h1.5" fill="none" stroke="#fff" stroke-width="1"/>
<path d="M63.8 705.2l3.8 2.2-3.8 2.2z" fill="#fff"/>
<path d="M61.9 712.7L64.5 716L69.7 709.9" fill="none" stroke="#fff" stroke-width="1.7"/>
<text x="73" y="713" font-size="11" fill="#ffffff" textLength="143" lengthAdjust="spacingAndGlyphs">Accesibilidad: todo correcto</text>
<rect x="1066" y="699" width="40" height="21" fill="#0b4f26"/>
<rect x="1079" y="702" width="1" height="13" fill="#ffffff"/>
<rect x="1083" y="702" width="1" height="13" fill="#ffffff"/>
<rect x="1087" y="702" width="1" height="13" fill="#ffffff"/>
<rect x="1091" y="702" width="1" height="13" fill="#ffffff"/>
<rect x="1079" y="702" width="13" height="1" fill="#ffffff"/>
<rect x="1079" y="706" width="13" height="1" fill="#ffffff"/>
<rect x="1079" y="710" width="13" height="1" fill="#ffffff"/>
<rect x="1079" y="714" width="13" height="1" fill="#ffffff"/>
<rect x="1119.5" y="702.5" width="13" height="13" fill="none" stroke="#fff" stroke-width="1"/>
<rect x="1122.5" y="705.5" width="7" height="7" fill="none" stroke="#fff" stroke-width="1"/>
<rect x="1124" y="707" width="5" height="1" fill="#fff"/>
<rect x="1124" y="709" width="5" height="1" fill="#fff"/>
<rect x="1124" y="711" width="5" height="1" fill="#fff"/>
<rect x="1159.5" y="702.5" width="13" height="13" fill="none" stroke="#fff" stroke-width="1"/>
<rect x="1161" y="703" width="2" height="5" fill="#fff"/>
<rect x="1164" y="703" width="2" height="5" fill="#fff"/>
<rect x="1161" y="708" width="11" height="1" fill="#fff"/>
<rect x="1193" y="709" width="7" height="1" fill="#fff"/>
<rect x="1205" y="709" width="100" height="1" fill="#fff"/>
<rect x="1253" y="704" width="5" height="11" fill="#ffffff"/>
<path d="M1310 709h8 M1314 705v8" fill="none" stroke="#fff" stroke-width="1.2"/>
<text x="1332" y="713.3" font-size="11" fill="#ffffff" textLength="26.5" lengthAdjust="spacingAndGlyphs">100%</text>
<rect x="0" y="720" width="1366" height="48" fill="#1c1c1c"/>
<rect x="0" y="720" width="1366" height="1" fill="#2a2a2a"/>
<defs><linearGradient id="cloud" x1="0" y1="0" x2="0" y2="1"><stop offset="0" stop-color="#d6e6fa"/><stop offset="1" stop-color="#86aee6"/></linearGradient><linearGradient id="win" x1="0" y1="0" x2="1" y2="1"><stop offset="0" stop-color="#6ad6ff"/><stop offset="1" stop-color="#1783e0"/></linearGradient><linearGradient id="meet" x1="0" y1="0" x2="0" y2="1"><stop offset="0" stop-color="#8a76dc"/><stop offset="1" stop-color="#5a4cc4"/></linearGradient><linearGradient id="edge" x1="0" y1="1" x2="1" y2="0"><stop offset="0" stop-color="#0c59a8"/><stop offset="0.5" stop-color="#1d9be0"/><stop offset="1" stop-color="#5fdc6a"/></linearGradient><linearGradient id="fold" x1="0" y1="0" x2="0" y2="1"><stop offset="0" stop-color="#ffd96a"/><stop offset="1" stop-color="#f0b42a"/></linearGradient><radialGradient id="ff" cx="0.4" cy="0.6" r="0.7"><stop offset="0" stop-color="#ffb03a"/><stop offset="0.6" stop-color="#ff6a2a"/><stop offset="1" stop-color="#e8335a"/></radialGradient><linearGradient id="cop1" x1="0" y1="0" x2="0" y2="1"><stop offset="0" stop-color="#2d7de8"/><stop offset="0.5" stop-color="#3cc29a"/><stop offset="1" stop-color="#f2c12e"/></linearGradient><linearGradient id="cop2" x1="0" y1="0" x2="1" y2="1"><stop offset="0" stop-color="#9d5ce8"/><stop offset="1" stop-color="#f06292"/></linearGradient><linearGradient id="edge2" x1="0" y1="0.2" x2="1" y2="0.6"><stop offset="0" stop-color="#2a9fe6"/><stop offset="0.5" stop-color="#2bc0d0"/><stop offset="1" stop-color="#5fe070"/></linearGradient></defs>
<circle cx="34" cy="738" r="5" fill="#f59a23"/>
<path d="M21.5 754a3.8 3.8 0 0 1-1.5-7.3a5.5 5.5 0 0 1 8.5-4.8a6.5 6.5 0 0 1 11 2.8a4.8 4.8 0 0 1 1.8 9.3z" fill="url(#cloud)"/>
<circle cx="37.7" cy="733.8" r="7.9" fill="#f59aa3"/>
<text x="37.9" y="738.3" font-size="11" fill="#111" text-anchor="middle">1</text>
<text x="50.6" y="739.9" font-size="11.5" fill="#ffffff" textLength="23.5" lengthAdjust="spacingAndGlyphs">18°C</text>
<text x="50.6" y="755.7" font-size="11.5" fill="#d6d6d6" textLength="94.5" lengthAdjust="spacingAndGlyphs">Mayorm. nublado</text>
<rect x="294" y="733" width="11" height="11" fill="url(#win)" rx="0.8"/>
<rect x="306" y="733" width="11" height="11" fill="url(#win)" rx="0.8"/>
<rect x="294" y="745" width="11" height="11" fill="url(#win)" rx="0.8"/>
<rect x="306" y="745" width="11" height="11" fill="url(#win)" rx="0.8"/>
<rect x="330.5" y="728.5" width="220" height="32" fill="#2c2c2c" stroke="#3a3a3a" stroke-width="1" rx="16"/>
<circle cx="348" cy="742.5" r="5" fill="none" stroke="#cfcfcf" stroke-width="1.6"/>
<path d="M351.5 746l4.5 4.5" fill="none" stroke="#cfcfcf" stroke-width="1.8"/>
<text x="367" y="748.5" font-size="13.5" fill="#cfcfcf" textLength="60" lengthAdjust="spacingAndGlyphs">Búsqueda</text>
<path d="M501 752h44l-3 4h-38z" fill="#5cc0e8"/>
<rect x="503" y="741" width="8" height="10" fill="#c9a36a"/>
<rect x="512" y="744" width="6" height="8" fill="#d7b27a"/>
<rect x="522.5" y="733" width="2.5" height="19" fill="#e8e8e8"/>
<circle cx="523.8" cy="738" r="2" fill="#e0e0e0"/>
<rect x="530" y="738" width="6" height="14" fill="#7fc4ea"/>
<rect x="537" y="733" width="7" height="19" fill="#4aa3d8"/>
<path d="M502 751a10 7 0 0 1 20 0z" fill="#9cc1dd"/>
<rect x="526" y="748" width="10" height="4" fill="#6fd08a"/>
<rect x="562" y="737" width="14" height="14" fill="#6a6a6a" rx="1.5"/>
<rect x="571" y="732" width="15" height="15" fill="#e8e8e8" rx="1.5"/>
<path d="M617.5 733a11 10.8 0 1 1-6.5 19.5l-5 2.5 1.5-4.8a11 10.8 0 0 1 10-17.2z" fill="url(#meet)"/>
<rect x="611" y="738.5" width="9" height="9" fill="#ffffff" rx="1.8"/>
<path d="M620 741.5l4.5-2.5v8l-4.5-2.5z" fill="#fff"/>
<rect x="656" y="733" width="18" height="21" fill="#185c37" rx="1"/>
<rect x="656" y="733" width="18" height="5.3" fill="#33c481" rx="1"/>
<rect x="656" y="738.3" width="18" height="5.3" fill="#21a366"/>
<rect x="656" y="743.6" width="18" height="5.3" fill="#107c41"/>
<rect x="650" y="738" width="12.5" height="12.5" fill="#107c41" rx="1"/>
<text x="656.3" y="748" font-size="9.5" fill="#fff" font-weight="bold" text-anchor="middle">X</text>
<circle cx="706" cy="744" r="12.1" fill="url(#edge2)"/>
<path d="M693.9 744A12.1 12.1 0 0 0 716.3 750.3C712 753 705 752.5 701.8 748.5C699.2 745.3 700 741 704.2 739.8C698.5 738.8 694.6 740.8 693.9 744z" fill="#1a6cc4"/>
<circle cx="705.8" cy="743.8" r="2.7" fill="#1c1c1c"/>
<path d="M707.6 745.6C709.2 748.2 713 749.6 716.6 748.2" fill="none" stroke="#1c1c1c" stroke-width="1.5"/>
<rect x="738" y="732" width="24" height="24" fill="#e8471c"/>
<path d="M743 752.5L744.5 741.5Q745.5 738.6 748.6 738L750.2 752.8z" fill="#fff"/>
<path d="M749.6 733.5L757 735.6L755.6 746.8Q754.2 749.8 751.6 750.2z" fill="#fff"/>
<path d="M782 735a1.5 1.5 0 0 1 1.5-1.5h7l2 2h12a1.5 1.5 0 0 1 1.5 1.5v16a1.5 1.5 0 0 1-1.5 1.5h-21a1.5 1.5 0 0 1-1.5-1.5z" fill="url(#fold)"/>
<rect x="782" y="733.5" width="9" height="3" fill="#e0a020" rx="1"/>
<rect x="786.5" y="748" width="15" height="7" fill="#1a86d8" rx="1.5"/>
<rect x="789" y="749.5" width="10" height="1.5" fill="#4fb0f0"/>
<rect x="832" y="733" width="18" height="21" fill="#103f91" rx="1"/>
<rect x="832" y="733" width="18" height="5.3" fill="#41a5ee" rx="1"/>
<rect x="832" y="738.3" width="18" height="5.3" fill="#2b7cd3"/>
<rect x="832" y="743.6" width="18" height="5.3" fill="#185abd"/>
<rect x="826" y="738" width="12.5" height="12.5" fill="#185abd" rx="1"/>
<text x="832.3" y="748" font-size="8.5" fill="#fff" font-weight="bold" text-anchor="middle">W</text>
<circle cx="881.8" cy="745" r="10.5" fill="url(#ff)"/>
<circle cx="882.5" cy="744.5" r="5" fill="#7542e5"/>
<path d="M885 732c6 3 9 8 8 13-2-3-4-5-7-6z" fill="#ffc43a"/>
<path d="M872 742c2-4 6-5 9-4-3 1-5 3-5 6z" fill="#ffa436"/>
<circle cx="926" cy="743.9" r="11.9" fill="#34a853"/>
<path d="M915.7 737.9499999999999A11.9 11.9 0 0 1 936.3 737.9499999999999H926A5.95 5.95 0 0 0 920.85 746.87z" fill="#ea4335"/>
<path d="M936.3 737.9499999999999A11.9 11.9 0 0 1 926 755.8L931.15 746.87A5.95 5.95 0 0 0 926 737.9499999999999z" fill="#fbbc04"/>
<circle cx="926" cy="743.9" r="5.6" fill="#fff"/><circle cx="926" cy="743.9" r="4.4" fill="#4285f4"/>
<circle cx="969.5" cy="743.9" r="11.9" fill="#34a853"/>
<path d="M959.2 737.9499999999999A11.9 11.9 0 0 1 979.8 737.9499999999999H969.5A5.95 5.95 0 0 0 964.35 746.87z" fill="#ea4335"/>
<path d="M979.8 737.9499999999999A11.9 11.9 0 0 1 969.5 755.8L974.65 746.87A5.95 5.95 0 0 0 969.5 737.9499999999999z" fill="#fbbc04"/>
<circle cx="969.5" cy="743.9" r="5.6" fill="#fff"/><circle cx="969.5" cy="743.9" r="4.4" fill="#4285f4"/>
<circle cx="979" cy="735" r="7.5" fill="#c8c8c8"/>
<path d="M975 738c0-3 2-5 4-5s4 2 4 5z M977 733a2 2 0 1 1 4 0a2 2 0 1 1-4 0z" fill="#3a3a3a"/>
<circle cx="1013.6" cy="743.9" r="12" fill="#1ed760"/>
<path d="M1006 740.2c5-1.8 10-1.4 15 1.2" fill="none" stroke="#111" stroke-width="2.2" stroke-linecap="round"/>
<path d="M1007 744.4c4-1.3 8-1 12 0.9" fill="none" stroke="#111" stroke-width="1.9" stroke-linecap="round"/>
<path d="M1008 748.2c3-0.9 6-0.7 9 0.7" fill="none" stroke="#111" stroke-width="1.6" stroke-linecap="round"/>
<rect x="659" y="760" width="6" height="2.7" fill="#a0a0a0" rx="1.3"/>
<rect x="790.8" y="760" width="6" height="2.7" fill="#a0a0a0" rx="1.3"/>
<rect x="966.8" y="760" width="6" height="2.7" fill="#a0a0a0" rx="1.3"/>
<rect x="1010.6" y="760" width="6" height="2.7" fill="#a0a0a0" rx="1.3"/>
<path d="M1104 747l6-6 6 6" fill="none" stroke="#fff" stroke-width="1.4"/>
<text x="1138" y="740.8" font-size="11.5" fill="#ffffff" textLength="20" lengthAdjust="spacingAndGlyphs">ESP</text>
<text x="1137" y="757" font-size="11.5" fill="#ffffff" textLength="22" lengthAdjust="spacingAndGlyphs">LAA</text>
<rect x="1178.5" y="736.5" width="12" height="10" fill="none" stroke="#fff" stroke-width="1"/>
<path d="M1184 747v3 M1180 751h8" fill="none" stroke="#fff" stroke-width="1"/>
<rect x="1190.5" y="735.5" width="3" height="5" fill="none" stroke="#fff" stroke-width="0.8"/>
<path d="M1192 741v10" fill="none" stroke="#fff" stroke-width="0.8"/>
<path d="M1203 741h3l4-4v13l-4-4h-3z" fill="none" stroke="#fff" stroke-width="1"/>
<path d="M1212 740.5a5 5 0 0 1 0 7 M1215 738a9 9 0 0 1 0 12" fill="none" stroke="#888" stroke-width="1"/>
<text x="1283.5" y="739.6" font-size="11.5" fill="#ffffff" text-anchor="end" textLength="29" lengthAdjust="spacingAndGlyphs">13:29</text>
<text x="1283.5" y="755.6" font-size="11.5" fill="#ffffff" text-anchor="end" textLength="49" lengthAdjust="spacingAndGlyphs">5/9/2024</text>
<path d="M1292 750h13l-2-3v-4a4.5 4.5 0 0 0-9 0v4z" fill="#8ad8f6"/>
<path d="M1296 752h5a2.5 2 0 0 1-5 0z" fill="#8ad8f6"/>
<path d="M1336 734h2.5c1.5 0 2.3 0.8 2.8 2l1 2.5h-6z" fill="#1f4fd8"/>
<path d="M1328.5 734H1336.8L1332.25 748H1325A2 2 0 0 1 1323 745.5L1326.5 736A3 3 0 0 1 1328.5 734z" fill="url(#cop1)"/>
<path d="M1338.8 739H1343.2A2 2 0 0 1 1345.2 741.5L1342.8 746.8A3 3 0 0 1 1340 748.8H1333.9z" fill="url(#cop2)"/>
<rect x="1328" y="749" width="18" height="7" fill="#f8c400" rx="2.5"/>
<text x="1337" y="755.3" font-size="6.5" fill="#111" font-weight="bold" text-anchor="middle" textLength="11" lengthAdjust="spacingAndGlyphs">PRE</text>
</svg>
</body></html>
